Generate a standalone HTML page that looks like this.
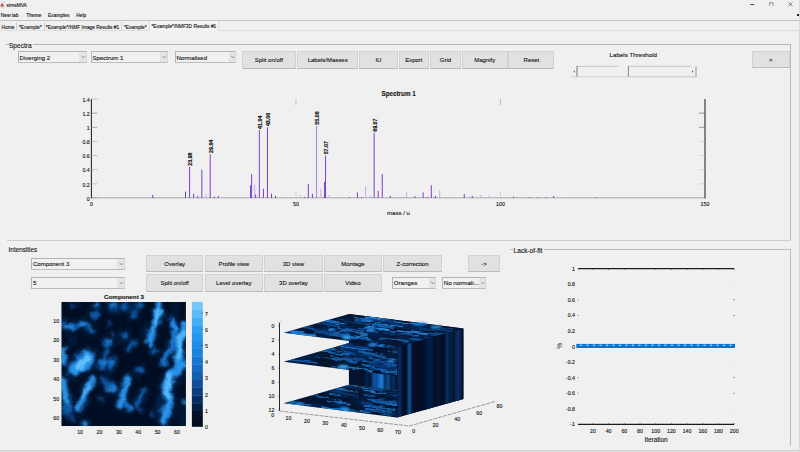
<!DOCTYPE html>
<html><head><meta charset="utf-8"><title>simsMVA</title>
<style>
html,body{margin:0;padding:0;}
body{width:800px;height:452px;overflow:hidden;background:#f0f0f0;position:relative;font-family:"Liberation Sans",sans-serif;color:#222;}
.t{position:absolute;white-space:nowrap;line-height:1;font-size:5.6px;color:#2a2a2a;}
.btn{position:absolute;background:#e1e1e1;border:1px solid #d2d2d2;border-bottom-color:#b9b9b9;box-sizing:border-box;text-align:center;font-size:6.0px;color:#333;white-space:nowrap;}
.btn span{position:absolute;left:0;right:0;top:50%;transform:translateY(-50%);line-height:1;}
.dd{position:absolute;background:#f1f1f1;border:1px solid #b4b4b4;border-right-color:#d6d6d6;border-bottom-color:#bcbcbc;box-sizing:border-box;}
.dd i{position:absolute;right:0;top:0;bottom:0;width:6.6px;background:#e4e4e4;}
.ln{position:absolute;background:#b8b8b8;}
svg{position:absolute;left:0;top:0;overflow:visible;}
svg text{font-family:"Liberation Sans",sans-serif;}
</style></head><body>

<svg width="800" height="452" viewBox="0 0 800 452">
<rect x="-0.5" y="1.6" width="5" height="6" fill="#f6f6f6" stroke="#cfcfcf" stroke-width="0.5"/>
<path d="M0.3 5.8 L2.4 2.6 L3.4 4.8 L4.3 7.0 L2.6 6.2 L1.4 7.0 Z" fill="#d8572a"/>
<path d="M0.2 5.8 L1.5 4.3 L2.3 2.9 L2.0 5.6 Z" fill="#4a78b8"/>
<path d="M750.2 4.6h4" stroke="#222" stroke-width="0.8" fill="none"/>
<path d="M769.6 5.8v-3.1h3.4v3.1" stroke="#555" stroke-width="0.6" fill="none"/>
<path d="M788.5 2.4l4 3.8M792.5 2.4l-4 3.8" stroke="#333" stroke-width="0.6" fill="none"/>
<rect x="797" y="14" width="2" height="2" fill="#222"/>
</svg>
<div class="ln" style="left:0.00px;top:20.00px;width:800.00px;height:1.00px;background:#c2c2c2"></div>
<div class="ln" style="left:0.00px;top:30.00px;width:800.00px;height:0.80px;background:#dddddd"></div>
<div style="position:absolute;left:16px;top:21.5px;width:0.8px;height:8.5px;background:#d4d4d4"></div>
<div style="position:absolute;left:43.5px;top:21.5px;width:0.8px;height:8.5px;background:#d4d4d4"></div>
<div style="position:absolute;left:121px;top:21.5px;width:0.8px;height:8.5px;background:#d4d4d4"></div>
<div style="position:absolute;left:148.5px;top:21.5px;width:0.8px;height:8.5px;background:#d4d4d4"></div>
<div style="position:absolute;left:148.5px;top:21px;width:70.69999999999999px;height:10px;background:#f4f4f4;border-right:1px solid #dcdcdc;border-left:1px solid #dcdcdc;box-sizing:border-box"></div>
<div class="ln" style="left:6.00px;top:44.20px;width:2.50px;height:0.90px;background:#b4b4b4"></div>
<div class="ln" style="left:32.50px;top:44.20px;width:758.50px;height:0.90px;background:#b4b4b4"></div>
<div class="ln" style="left:790.00px;top:44.20px;width:0.90px;height:196.40px;background:#b9b9b9"></div>
<div class="ln" style="left:7.00px;top:239.90px;width:784.00px;height:0.90px;background:#cfcfcf"></div>
<div class="dd" style="left:17.60px;top:50.90px;width:69.10px;height:12.00px"><i></i></div>
<div class="dd" style="left:90.50px;top:50.90px;width:77.10px;height:12.00px"><i></i></div>
<div class="dd" style="left:174.50px;top:50.90px;width:61.70px;height:12.00px"><i></i></div>
<div class="btn" style="left:242.00px;top:51.30px;width:53.80px;height:17.30px"></div>
<div class="btn" style="left:297.00px;top:51.30px;width:61.30px;height:17.30px"></div>
<div class="btn" style="left:359.30px;top:51.30px;width:38.30px;height:17.30px"></div>
<div class="btn" style="left:398.60px;top:51.30px;width:30.40px;height:17.30px"></div>
<div class="btn" style="left:430.20px;top:51.30px;width:30.60px;height:17.30px"></div>
<div class="btn" style="left:462.00px;top:51.30px;width:45.50px;height:17.30px"></div>
<div class="btn" style="left:508.40px;top:51.30px;width:46.10px;height:17.30px"></div>
<div class="btn" style="left:752.00px;top:51.30px;width:37.60px;height:17.00px"></div>
<svg width="800" height="452" viewBox="0 0 800 452">
<rect x="571" y="66" width="125.5" height="11" fill="#f0f0f0"/>
<path d="M577 66.4H619" stroke="#bdbdbd" stroke-width="0.8" fill="none"/>
<path d="M577 66v11" stroke="#6a6a6a" stroke-width="0.9" fill="none"/>
<path d="M571 76.8H628" stroke="#cfcfcf" stroke-width="0.9" fill="none"/>
<path d="M628.4 66.4H691" stroke="#bdbdbd" stroke-width="0.8" fill="none"/>
<path d="M628.4 66v11" stroke="#7a7a7a" stroke-width="0.9" fill="none"/>
<path d="M628.4 76.8H696" stroke="#c4c4c4" stroke-width="0.9" fill="none"/>
<path d="M696 66.4v10.6" stroke="#8a8a8a" stroke-width="0.9" fill="none"/>
<path d="M574.8 70.3l-1.3 1.2 1.3 1.2z" fill="#555"/>
<path d="M692 70.3l1.3 1.2 -1.3 1.2z" fill="#444"/>
</svg>
<svg width="800" height="452" viewBox="0 0 800 452">
<path d="M91.4 197.8H705.0" stroke="#a9a9a9" stroke-width="1.0" fill="none"/>
<path d="M91.4 99.0V198.4" stroke="#222" stroke-width="1.05" fill="none"/>
<path d="M705.0 99.0V198.4" stroke="#222" stroke-width="1.05" fill="none"/>
<path d="M91.4 198.00h6" stroke="#a2a2a2" stroke-width="0.6" fill="none"/>
<path d="M91.4 183.86h6" stroke="#a2a2a2" stroke-width="0.6" fill="none"/>
<path d="M705.0 183.86h-6" stroke="#c8c8c8" stroke-width="0.6" fill="none"/>
<path d="M91.4 169.71h6" stroke="#a2a2a2" stroke-width="0.6" fill="none"/>
<path d="M705.0 169.71h-6" stroke="#c8c8c8" stroke-width="0.6" fill="none"/>
<path d="M91.4 155.57h6" stroke="#a2a2a2" stroke-width="0.6" fill="none"/>
<path d="M705.0 155.57h-6" stroke="#c8c8c8" stroke-width="0.6" fill="none"/>
<path d="M91.4 141.43h6" stroke="#a2a2a2" stroke-width="0.6" fill="none"/>
<path d="M705.0 141.43h-6" stroke="#c8c8c8" stroke-width="0.6" fill="none"/>
<path d="M91.4 127.29h6" stroke="#777" stroke-width="0.6" fill="none"/>
<path d="M705.0 127.29h-6" stroke="#555" stroke-width="0.6" fill="none"/>
<path d="M91.4 113.14h6" stroke="#777" stroke-width="0.6" fill="none"/>
<path d="M705.0 113.14h-6" stroke="#555" stroke-width="0.6" fill="none"/>
<path d="M91.4 99.00h6" stroke="#a2a2a2" stroke-width="0.6" fill="none"/>
<path d="M295.93 198.0v-6" stroke="#c0c0c0" stroke-width="0.7" fill="none"/>
<path d="M295.93 99.0v6" stroke="#aaaaaa" stroke-width="0.7" fill="none"/>
<path d="M500.47 198.0v-6" stroke="#c0c0c0" stroke-width="0.7" fill="none"/>
<path d="M500.47 99.0v6" stroke="#aaaaaa" stroke-width="0.7" fill="none"/>
<path d="M148.75 198.0V197.15" stroke="#c3a6e3" stroke-width="0.95" fill="none"/>
<path d="M152.76 198.0V194.82" stroke="#7836c6" stroke-width="0.95" fill="none"/>
<path d="M185.49 198.0V191.64" stroke="#3d4a7a" stroke-width="0.95" fill="none"/>
<path d="M189.58 198.0V166.89" stroke="#7836c6" stroke-width="0.95" fill="none"/>
<path d="M193.67 198.0V193.76" stroke="#7836c6" stroke-width="0.95" fill="none"/>
<path d="M197.76 198.0V195.88" stroke="#7836c6" stroke-width="0.95" fill="none"/>
<path d="M201.85 198.0V169.71" stroke="#7836c6" stroke-width="0.95" fill="none"/>
<path d="M206.02 198.0V193.76" stroke="#c3a6e3" stroke-width="0.95" fill="none"/>
<path d="M210.19 198.0V154.16" stroke="#7836c6" stroke-width="0.95" fill="none"/>
<path d="M214.32 198.0V196.59" stroke="#7836c6" stroke-width="0.95" fill="none"/>
<path d="M218.42 198.0V195.88" stroke="#7836c6" stroke-width="0.95" fill="none"/>
<path d="M250.53 198.0V185.27" stroke="#7836c6" stroke-width="0.95" fill="none"/>
<path d="M251.63 198.0V173.96" stroke="#7836c6" stroke-width="0.95" fill="none"/>
<path d="M254.70 198.0V184.56" stroke="#c3a6e3" stroke-width="0.95" fill="none"/>
<path d="M255.64 198.0V194.46" stroke="#7836c6" stroke-width="0.95" fill="none"/>
<path d="M259.36 198.0V130.11" stroke="#7836c6" stroke-width="0.95" fill="none"/>
<path d="M263.41 198.0V188.81" stroke="#7836c6" stroke-width="0.95" fill="none"/>
<path d="M267.46 198.0V127.29" stroke="#7836c6" stroke-width="0.95" fill="none"/>
<path d="M271.47 198.0V193.76" stroke="#7836c6" stroke-width="0.95" fill="none"/>
<path d="M275.56 198.0V195.88" stroke="#7836c6" stroke-width="0.95" fill="none"/>
<path d="M300.23 198.0V195.17" stroke="#c3a6e3" stroke-width="0.95" fill="none"/>
<path d="M304.32 198.0V196.94" stroke="#7836c6" stroke-width="0.95" fill="none"/>
<path d="M308.33 198.0V183.86" stroke="#7836c6" stroke-width="0.95" fill="none"/>
<path d="M312.42 198.0V193.76" stroke="#7836c6" stroke-width="0.95" fill="none"/>
<path d="M316.59 198.0V125.87" stroke="#a77ddb" stroke-width="0.95" fill="none"/>
<path d="M320.89 198.0V188.81" stroke="#c3a6e3" stroke-width="0.95" fill="none"/>
<path d="M324.45 198.0V181.74" stroke="#7836c6" stroke-width="0.95" fill="none"/>
<path d="M325.55 198.0V155.57" stroke="#7836c6" stroke-width="0.95" fill="none"/>
<path d="M329.07 198.0V195.17" stroke="#c3a6e3" stroke-width="0.95" fill="none"/>
<path d="M349.32 198.0V197.15" stroke="#7836c6" stroke-width="0.95" fill="none"/>
<path d="M357.42 198.0V192.34" stroke="#7836c6" stroke-width="0.95" fill="none"/>
<path d="M361.51 198.0V196.94" stroke="#7836c6" stroke-width="0.95" fill="none"/>
<path d="M365.60 198.0V186.69" stroke="#c3a6e3" stroke-width="0.95" fill="none"/>
<path d="M369.97 198.0V195.17" stroke="#c3a6e3" stroke-width="0.95" fill="none"/>
<path d="M374.15 198.0V132.94" stroke="#7836c6" stroke-width="0.95" fill="none"/>
<path d="M378.16 198.0V190.93" stroke="#7836c6" stroke-width="0.95" fill="none"/>
<path d="M382.25 198.0V173.96" stroke="#7836c6" stroke-width="0.95" fill="none"/>
<path d="M386.34 198.0V197.15" stroke="#c3a6e3" stroke-width="0.95" fill="none"/>
<path d="M390.31 198.0V195.88" stroke="#7836c6" stroke-width="0.95" fill="none"/>
<path d="M394.40 198.0V197.15" stroke="#c3a6e3" stroke-width="0.95" fill="none"/>
<path d="M406.59 198.0V192.34" stroke="#c3a6e3" stroke-width="0.95" fill="none"/>
<path d="M410.88 198.0V197.15" stroke="#c3a6e3" stroke-width="0.95" fill="none"/>
<path d="M414.85 198.0V196.02" stroke="#7836c6" stroke-width="0.95" fill="none"/>
<path d="M423.15 198.0V192.34" stroke="#7836c6" stroke-width="0.95" fill="none"/>
<path d="M427.24 198.0V196.94" stroke="#7836c6" stroke-width="0.95" fill="none"/>
<path d="M431.33 198.0V185.27" stroke="#7836c6" stroke-width="0.95" fill="none"/>
<path d="M435.43 198.0V195.88" stroke="#7836c6" stroke-width="0.95" fill="none"/>
<path d="M439.72 198.0V190.22" stroke="#c3a6e3" stroke-width="0.95" fill="none"/>
<path d="M464.26 198.0V194.11" stroke="#7836c6" stroke-width="0.95" fill="none"/>
<path d="M472.24 198.0V195.88" stroke="#7836c6" stroke-width="0.95" fill="none"/>
<path d="M480.83 198.0V195.17" stroke="#c3a6e3" stroke-width="0.95" fill="none"/>
<path d="M484.51 198.0V197.15" stroke="#c3a6e3" stroke-width="0.95" fill="none"/>
<path d="M489.01 198.0V196.02" stroke="#c3a6e3" stroke-width="0.95" fill="none"/>
<path d="M496.79 198.0V197.15" stroke="#c3a6e3" stroke-width="0.95" fill="none"/>
<path d="M513.56 198.0V196.59" stroke="#7836c6" stroke-width="0.95" fill="none"/>
<path d="M521.33 198.0V197.01" stroke="#c3a6e3" stroke-width="0.95" fill="none"/>
<path d="M529.71 198.0V197.01" stroke="#7836c6" stroke-width="0.95" fill="none"/>
<path d="M537.69 198.0V197.15" stroke="#7836c6" stroke-width="0.95" fill="none"/>
<path d="M545.87 198.0V197.01" stroke="#7836c6" stroke-width="0.95" fill="none"/>
<path d="M553.65 198.0V196.02" stroke="#7836c6" stroke-width="0.95" fill="none"/>
<path d="M562.64 198.0V197.15" stroke="#c3a6e3" stroke-width="0.95" fill="none"/>
<path d="M595.78 198.0V197.15" stroke="#7836c6" stroke-width="0.95" fill="none"/>
<text transform="translate(192.38 165.69) rotate(-90)" font-size="5.3" font-weight="bold" fill="#0a0a0a" stroke="#0a0a0a" stroke-width="0.15">23.98</text>
<text transform="translate(213.04 152.96) rotate(-90)" font-size="5.3" font-weight="bold" fill="#0a0a0a" stroke="#0a0a0a" stroke-width="0.15">29.04</text>
<text transform="translate(262.13 128.91) rotate(-90)" font-size="5.3" font-weight="bold" fill="#0a0a0a" stroke="#0a0a0a" stroke-width="0.15">41.04</text>
<text transform="translate(270.31 126.09) rotate(-90)" font-size="5.3" font-weight="bold" fill="#0a0a0a" stroke="#0a0a0a" stroke-width="0.15">43.06</text>
<text transform="translate(319.40 124.67) rotate(-90)" font-size="5.3" font-weight="bold" fill="#0a0a0a" stroke="#0a0a0a" stroke-width="0.15">55.06</text>
<text transform="translate(328.40 154.37) rotate(-90)" font-size="5.3" font-weight="bold" fill="#0a0a0a" stroke="#0a0a0a" stroke-width="0.15">57.07</text>
<text transform="translate(376.87 131.74) rotate(-90)" font-size="5.3" font-weight="bold" fill="#0a0a0a" stroke="#0a0a0a" stroke-width="0.15">69.07</text>
</svg>
<div class="dd" style="left:31.00px;top:257.90px;width:94.00px;height:12.00px"><i></i></div>
<div class="dd" style="left:31.00px;top:276.90px;width:94.00px;height:12.00px"><i></i></div>
<div class="btn" style="left:145.80px;top:255.25px;width:57.70px;height:17.05px"></div>
<div class="btn" style="left:204.90px;top:255.25px;width:57.70px;height:17.05px"></div>
<div class="btn" style="left:264.20px;top:255.25px;width:58.40px;height:17.05px"></div>
<div class="btn" style="left:324.20px;top:255.25px;width:57.40px;height:17.05px"></div>
<div class="btn" style="left:383.30px;top:255.25px;width:58.40px;height:17.05px"></div>
<div class="btn" style="left:145.80px;top:274.30px;width:57.70px;height:17.50px"></div>
<div class="btn" style="left:204.90px;top:274.30px;width:57.70px;height:17.50px"></div>
<div class="btn" style="left:264.20px;top:274.30px;width:58.40px;height:17.50px"></div>
<div class="btn" style="left:324.20px;top:274.30px;width:57.40px;height:17.50px"></div>
<div class="btn" style="left:467.70px;top:255.25px;width:32.70px;height:17.05px"></div>
<div class="dd" style="left:391.70px;top:276.90px;width:44.60px;height:12.00px"><i></i></div>
<div class="dd" style="left:441.70px;top:276.90px;width:44.50px;height:12.00px"><i></i></div>
<svg width="800" height="452" viewBox="0 0 800 452">
<defs><filter id="b1" filterUnits="userSpaceOnUse" x="51.7" y="292.0" width="144.0" height="144.0"><feGaussianBlur stdDeviation="1.5"/></filter>
<filter id="b2" filterUnits="userSpaceOnUse" x="51.7" y="292.0" width="144.0" height="144.0"><feGaussianBlur stdDeviation="1.0"/></filter>
<filter id="b0" filterUnits="userSpaceOnUse" x="51.7" y="292.0" width="144.0" height="144.0"><feGaussianBlur stdDeviation="2.4"/></filter>
<clipPath id="cimg"><rect x="61.7" y="302.0" width="124.0" height="124.0"/></clipPath></defs>
<rect x="61.7" y="302.0" width="124.0" height="124.0" fill="#020e23"/>
<filter id="wob" filterUnits="userSpaceOnUse" x="51.7" y="292.0" width="144.0" height="144.0"><feTurbulence type="fractalNoise" baseFrequency="0.11" numOctaves="2" seed="7" result="n"/><feDisplacementMap in="SourceGraphic" in2="n" scale="7" xChannelSelector="R" yChannelSelector="G"/></filter>
<g clip-path="url(#cimg)"><g filter="url(#wob)">
<rect x="51.7" y="292.0" width="144.0" height="144.0" fill="#020e23"/>
<g filter="url(#b0)"><path d="M138.9 394.0L138.7 403.6" stroke="#06234e" stroke-width="5.2" stroke-linecap="round" stroke-linejoin="round" fill="none" opacity="0.7"/><path d="M176.1 305.6L173.9 315.2" stroke="#06234e" stroke-width="4.9" stroke-linecap="round" stroke-linejoin="round" fill="none" opacity="0.7"/><path d="M173.4 316.0L171.2 320.8" stroke="#06234e" stroke-width="4.6" stroke-linecap="round" stroke-linejoin="round" fill="none" opacity="0.7"/><path d="M132.9 303.6L129.2 308.6" stroke="#06234e" stroke-width="5.7" stroke-linecap="round" stroke-linejoin="round" fill="none" opacity="0.7"/><path d="M156.6 321.8L156.4 325.8" stroke="#06234e" stroke-width="4.9" stroke-linecap="round" stroke-linejoin="round" fill="none" opacity="0.7"/><path d="M77.4 302.2L77.6 306.7" stroke="#06234e" stroke-width="3.6" stroke-linecap="round" stroke-linejoin="round" fill="none" opacity="0.7"/><path d="M183.5 410.2L180.3 419.9" stroke="#06234e" stroke-width="4.6" stroke-linecap="round" stroke-linejoin="round" fill="none" opacity="0.7"/><path d="M145.8 327.4L146.4 335.2" stroke="#06234e" stroke-width="5.9" stroke-linecap="round" stroke-linejoin="round" fill="none" opacity="0.7"/><path d="M172.5 339.0L169.7 343.2" stroke="#06234e" stroke-width="3.4" stroke-linecap="round" stroke-linejoin="round" fill="none" opacity="0.7"/><path d="M69.8 339.4L68.4 342.4" stroke="#06234e" stroke-width="5.0" stroke-linecap="round" stroke-linejoin="round" fill="none" opacity="0.7"/><path d="M103.6 340.4L103.5 346.8" stroke="#06234e" stroke-width="3.9" stroke-linecap="round" stroke-linejoin="round" fill="none" opacity="0.7"/><path d="M121.4 389.4L116.7 399.2" stroke="#06234e" stroke-width="3.1" stroke-linecap="round" stroke-linejoin="round" fill="none" opacity="0.7"/><path d="M154.7 406.8L149.8 415.3" stroke="#06234e" stroke-width="4.1" stroke-linecap="round" stroke-linejoin="round" fill="none" opacity="0.7"/><path d="M133.4 303.1L128.7 307.4" stroke="#06234e" stroke-width="5.9" stroke-linecap="round" stroke-linejoin="round" fill="none" opacity="0.7"/><path d="M86.1 395.7L86.6 405.3" stroke="#06234e" stroke-width="4.0" stroke-linecap="round" stroke-linejoin="round" fill="none" opacity="0.7"/><path d="M105.7 367.1L105.3 370.8" stroke="#06234e" stroke-width="5.2" stroke-linecap="round" stroke-linejoin="round" fill="none" opacity="0.7"/><path d="M160.6 408.6L155.8 418.2" stroke="#06234e" stroke-width="3.3" stroke-linecap="round" stroke-linejoin="round" fill="none" opacity="0.7"/><path d="M104.0 377.7L104.5 383.1" stroke="#06234e" stroke-width="5.8" stroke-linecap="round" stroke-linejoin="round" fill="none" opacity="0.7"/><path d="M129.3 340.7L126.2 345.0" stroke="#06234e" stroke-width="3.2" stroke-linecap="round" stroke-linejoin="round" fill="none" opacity="0.7"/><path d="M80.2 387.5L81.1 391.6" stroke="#06234e" stroke-width="3.1" stroke-linecap="round" stroke-linejoin="round" fill="none" opacity="0.7"/><path d="M184.1 368.2L181.5 372.8" stroke="#06234e" stroke-width="4.8" stroke-linecap="round" stroke-linejoin="round" fill="none" opacity="0.7"/><path d="M164.2 358.5L161.7 361.9" stroke="#06234e" stroke-width="5.7" stroke-linecap="round" stroke-linejoin="round" fill="none" opacity="0.7"/><path d="M65.8 363.2L65.8 367.1" stroke="#06234e" stroke-width="5.2" stroke-linecap="round" stroke-linejoin="round" fill="none" opacity="0.7"/><path d="M179.5 380.2L179.2 383.9" stroke="#06234e" stroke-width="4.3" stroke-linecap="round" stroke-linejoin="round" fill="none" opacity="0.7"/><path d="M80.2 406.7L77.0 412.9" stroke="#06234e" stroke-width="6.0" stroke-linecap="round" stroke-linejoin="round" fill="none" opacity="0.7"/><path d="M167.4 423.0L165.1 429.4" stroke="#06234e" stroke-width="5.2" stroke-linecap="round" stroke-linejoin="round" fill="none" opacity="0.7"/><path d="M121.1 338.1L118.5 342.1" stroke="#06234e" stroke-width="4.1" stroke-linecap="round" stroke-linejoin="round" fill="none" opacity="0.7"/><path d="M184.3 421.0L183.0 427.5" stroke="#06234e" stroke-width="4.0" stroke-linecap="round" stroke-linejoin="round" fill="none" opacity="0.7"/><path d="M72.8 335.8L72.4 344.8" stroke="#06234e" stroke-width="4.1" stroke-linecap="round" stroke-linejoin="round" fill="none" opacity="0.7"/><path d="M159.2 398.1L158.3 405.7" stroke="#06234e" stroke-width="5.3" stroke-linecap="round" stroke-linejoin="round" fill="none" opacity="0.7"/><circle cx="113.2" cy="305.8" r="7.2" fill="#093a78" opacity="0.6"/><circle cx="96.7" cy="305.0" r="4.5" fill="#093a78" opacity="0.6"/><circle cx="94.5" cy="315.1" r="5.1" fill="#093a78" opacity="0.6"/><path d="M64.3 327.3L72.9 326.6L81.6 323.0L87.3 326.6L93.1 330.9" stroke="#093a78" stroke-width="7.2" stroke-linecap="round" stroke-linejoin="round" fill="none" opacity="0.6"/><circle cx="62.9" cy="323.0" r="4.5" fill="#093a78" opacity="0.6"/><circle cx="108.2" cy="342.4" r="5.1" fill="#093a78" opacity="0.6"/><path d="M62.9 351.0L63.2 362.0" stroke="#0c4890" stroke-width="8.0" stroke-linecap="round" stroke-linejoin="round" fill="none" opacity="0.6"/><path d="M87.2 357.0L81.7 362.5L74.7 369.5" stroke="#0c4890" stroke-width="17.6" stroke-linecap="round" stroke-linejoin="round" fill="none" opacity="0.6"/><circle cx="87.7" cy="364.0" r="7.2" fill="#0c4890" opacity="0.6"/><circle cx="77.7" cy="360.0" r="5.6" fill="#093a78" opacity="0.6"/><circle cx="103.1" cy="361.8" r="5.1" fill="#0c4890" opacity="0.6"/><circle cx="111.7" cy="362.0" r="5.4" fill="#093a78" opacity="0.6"/><path d="M107.5 349.5L103.7 360.0" stroke="#093a78" stroke-width="4.6" stroke-linecap="round" stroke-linejoin="round" fill="none" opacity="0.6"/><circle cx="124.0" cy="334.5" r="4.8" fill="#093a78" opacity="0.6"/><path d="M158.7 304.0L157.9 317.3L152.9 328.8L150.0 342.0" stroke="#0c4890" stroke-width="9.6" stroke-linecap="round" stroke-linejoin="round" fill="none" opacity="0.6"/><path d="M173.0 321.0L174.5 330.2L171.6 347.5L165.1 357.5L163.7 363.3" stroke="#093a78" stroke-width="6.7" stroke-linecap="round" stroke-linejoin="round" fill="none" opacity="0.6"/><path d="M185.7 326.0L180.2 337.4L178.8 348.9L179.5 363.3" stroke="#0c4890" stroke-width="11.2" stroke-linecap="round" stroke-linejoin="round" fill="none" opacity="0.6"/><circle cx="139.3" cy="305.0" r="4.8" fill="#093a78" opacity="0.6"/><circle cx="124.2" cy="307.2" r="4.8" fill="#093a78" opacity="0.6"/><circle cx="134.2" cy="314.4" r="5.8" fill="#093a78" opacity="0.6"/><circle cx="125.6" cy="335.2" r="4.8" fill="#093a78" opacity="0.6"/><path d="M134.9 343.1L129.2 349.6" stroke="#093a78" stroke-width="5.5" stroke-linecap="round" stroke-linejoin="round" fill="none" opacity="0.6"/><circle cx="154.4" cy="351.0" r="4.5" fill="#093a78" opacity="0.6"/><path d="M62.7 379.0L65.0 394.6L68.6 406.0" stroke="#0c4890" stroke-width="8.8" stroke-linecap="round" stroke-linejoin="round" fill="none" opacity="0.6"/><path d="M92.4 378.8L87.3 390.3L81.6 400.4L78.7 407.6" stroke="#0c4890" stroke-width="8.0" stroke-linecap="round" stroke-linejoin="round" fill="none" opacity="0.6"/><circle cx="111.7" cy="388.2" r="6.7" fill="#0c4890" opacity="0.6"/><path d="M103.1 378.8L111.7 388.2" stroke="#093a78" stroke-width="5.2" stroke-linecap="round" stroke-linejoin="round" fill="none" opacity="0.6"/><path d="M128.5 377.4L124.7 389.0L120.4 406.0" stroke="#0c4890" stroke-width="8.0" stroke-linecap="round" stroke-linejoin="round" fill="none" opacity="0.6"/><circle cx="110.3" cy="367.3" r="4.8" fill="#093a78" opacity="0.6"/><circle cx="101.7" cy="365.0" r="4.8" fill="#093a78" opacity="0.6"/><circle cx="84.4" cy="424.0" r="4.2" fill="#0c4890" opacity="0.6"/><circle cx="66.7" cy="410.0" r="7.2" fill="#093a78" opacity="0.6"/><path d="M182.4 365.9L172.3 373.0L165.9 386.0L169.5 400.4L166.6 410.5L163.7 420.5" stroke="#0c4890" stroke-width="12.0" stroke-linecap="round" stroke-linejoin="round" fill="none" opacity="0.6"/><circle cx="140.0" cy="370.2" r="5.1" fill="#093a78" opacity="0.6"/><path d="M143.6 390.3L137.1 406.1" stroke="#093a78" stroke-width="6.1" stroke-linecap="round" stroke-linejoin="round" fill="none" opacity="0.6"/><path d="M126.3 402.5L129.9 409.0" stroke="#093a78" stroke-width="6.1" stroke-linecap="round" stroke-linejoin="round" fill="none" opacity="0.6"/><circle cx="185.3" cy="401.8" r="4.2" fill="#0c4890" opacity="0.6"/></g>
<g filter="url(#b1)"><circle cx="113.2" cy="305.8" r="3" fill="#62c0fb" opacity="1.0"/><circle cx="113.2" cy="305.8" r="4.95" fill="#105aa8" opacity="0.8"/><circle cx="96.7" cy="305.0" r="3.08" fill="#1874cc" opacity="1.0"/><circle cx="72.2" cy="305.8" r="3.2" fill="#09346e" opacity="1.0"/><circle cx="94.5" cy="315.1" r="3.5200000000000005" fill="#105aa8" opacity="1.0"/><path d="M64.3 327.3L72.9 326.6L81.6 323.0L87.3 326.6L93.1 330.9" stroke="#105aa8" stroke-width="5.5" stroke-linecap="round" stroke-linejoin="round" fill="none" opacity="1.0"/><circle cx="62.9" cy="323.0" r="3.08" fill="#105aa8" opacity="1.0"/><circle cx="108.2" cy="342.4" r="3.5200000000000005" fill="#1874cc" opacity="1.0"/><circle cx="109.7" cy="323.7" r="3" fill="#09346e" opacity="1.0"/><circle cx="113.2" cy="334.5" r="3" fill="#09346e" opacity="1.0"/><path d="M62.9 351.0L63.2 362.0" stroke="#2794ec" stroke-width="5.5" stroke-linecap="round" stroke-linejoin="round" fill="none" opacity="1.0"/><path d="M87.2 357.0L81.7 362.5L74.7 369.5" stroke="#2794ec" stroke-width="12.1" stroke-linecap="round" stroke-linejoin="round" fill="none" opacity="1.0"/><circle cx="87.7" cy="364.0" r="4.95" fill="#2794ec" opacity="1.0"/><circle cx="77.7" cy="360.0" r="3.8500000000000005" fill="#1874cc" opacity="1.0"/><circle cx="103.1" cy="361.8" r="3.5200000000000005" fill="#2794ec" opacity="1.0"/><circle cx="111.7" cy="362.0" r="3.74" fill="#1874cc" opacity="1.0"/><path d="M107.5 349.5L103.7 360.0" stroke="#105aa8" stroke-width="3.5" stroke-linecap="round" stroke-linejoin="round" fill="none" opacity="1.0"/><circle cx="124.0" cy="334.5" r="3.3000000000000003" fill="#105aa8" opacity="1.0"/><path d="M158.7 304.0L157.9 317.3L152.9 328.8L150.0 342.0" stroke="#2794ec" stroke-width="6.6" stroke-linecap="round" stroke-linejoin="round" fill="none" opacity="1.0"/><path d="M173.0 321.0L174.5 330.2L171.6 347.5L165.1 357.5L163.7 363.3" stroke="#1874cc" stroke-width="5.1" stroke-linecap="round" stroke-linejoin="round" fill="none" opacity="1.0"/><path d="M185.7 326.0L180.2 337.4L178.8 348.9L179.5 363.3" stroke="#2794ec" stroke-width="7.7" stroke-linecap="round" stroke-linejoin="round" fill="none" opacity="1.0"/><circle cx="139.3" cy="305.0" r="3.3000000000000003" fill="#105aa8" opacity="1.0"/><circle cx="124.2" cy="307.2" r="3.3000000000000003" fill="#105aa8" opacity="1.0"/><circle cx="134.2" cy="314.4" r="3.9600000000000004" fill="#105aa8" opacity="0.8"/><circle cx="125.6" cy="335.2" r="3.3000000000000003" fill="#105aa8" opacity="1.0"/><path d="M134.9 343.1L129.2 349.6" stroke="#105aa8" stroke-width="4.2" stroke-linecap="round" stroke-linejoin="round" fill="none" opacity="1.0"/><circle cx="154.4" cy="351.0" r="3.08" fill="#105aa8" opacity="1.0"/><circle cx="169.5" cy="317.3" r="3" fill="#09346e" opacity="1.0"/><path d="M62.7 379.0L65.0 394.6L68.6 406.0" stroke="#2794ec" stroke-width="6.1" stroke-linecap="round" stroke-linejoin="round" fill="none" opacity="1.0"/><path d="M92.4 378.8L87.3 390.3L81.6 400.4L78.7 407.6" stroke="#2794ec" stroke-width="5.5" stroke-linecap="round" stroke-linejoin="round" fill="none" opacity="1.0"/><circle cx="111.7" cy="388.2" r="4.620000000000001" fill="#2794ec" opacity="1.0"/><path d="M103.1 378.8L111.7 388.2" stroke="#105aa8" stroke-width="4.0" stroke-linecap="round" stroke-linejoin="round" fill="none" opacity="1.0"/><path d="M128.5 377.4L124.7 389.0L120.4 406.0" stroke="#2794ec" stroke-width="5.5" stroke-linecap="round" stroke-linejoin="round" fill="none" opacity="1.0"/><circle cx="110.3" cy="367.3" r="3.3000000000000003" fill="#105aa8" opacity="1.0"/><circle cx="101.7" cy="365.0" r="3.3000000000000003" fill="#1874cc" opacity="1.0"/><circle cx="84.4" cy="424.0" r="2.8600000000000003" fill="#2794ec" opacity="1.0"/><circle cx="66.7" cy="410.0" r="4.95" fill="#105aa8" opacity="1.0"/><circle cx="101.7" cy="399.0" r="3" fill="#09346e" opacity="1.0"/><circle cx="71.7" cy="418.0" r="4" fill="#09346e" opacity="1.0"/><path d="M182.4 365.9L172.3 373.0L165.9 386.0L169.5 400.4L166.6 410.5L163.7 420.5" stroke="#2794ec" stroke-width="8.2" stroke-linecap="round" stroke-linejoin="round" fill="none" opacity="1.0"/><circle cx="140.0" cy="370.2" r="3.5200000000000005" fill="#105aa8" opacity="1.0"/><path d="M143.6 390.3L137.1 406.1" stroke="#105aa8" stroke-width="4.6" stroke-linecap="round" stroke-linejoin="round" fill="none" opacity="1.0"/><path d="M126.3 402.5L129.9 409.0" stroke="#1874cc" stroke-width="4.6" stroke-linecap="round" stroke-linejoin="round" fill="none" opacity="1.0"/><circle cx="185.3" cy="401.8" r="2.8600000000000003" fill="#2794ec" opacity="1.0"/><circle cx="140.7" cy="410.0" r="3" fill="#09346e" opacity="1.0"/><circle cx="151.7" cy="414.0" r="3" fill="#09346e" opacity="1.0"/></g>
<g filter="url(#b2)"><path d="M66.2 327.3L72.7 326.8" stroke="#2794ec" stroke-width="3.0" stroke-linecap="round" stroke-linejoin="round" fill="none" opacity="0.9"/><circle cx="81.6" cy="323.0" r="2.2" fill="#2794ec" opacity="0.9"/><path d="M86.2 358.0L78.7 365.5" stroke="#62c0fb" stroke-width="6.5" stroke-linecap="round" stroke-linejoin="round" fill="none" opacity="1"/><path d="M158.3 311.0L156.2 323.0" stroke="#62c0fb" stroke-width="3.0" stroke-linecap="round" stroke-linejoin="round" fill="none" opacity="0.9"/><path d="M173.2 322.5L174.3 331.0" stroke="#2794ec" stroke-width="3.0" stroke-linecap="round" stroke-linejoin="round" fill="none" opacity="0.9"/><path d="M182.7 332.0L179.7 342.0L179.0 357.0" stroke="#62c0fb" stroke-width="3.4" stroke-linecap="round" stroke-linejoin="round" fill="none" opacity="0.9"/><path d="M89.7 384.0L83.7 396.0" stroke="#62c0fb" stroke-width="2.5" stroke-linecap="round" stroke-linejoin="round" fill="none" opacity="0.7"/><path d="M170.7 375.0L166.2 387.0L167.7 396.0" stroke="#62c0fb" stroke-width="4.0" stroke-linecap="round" stroke-linejoin="round" fill="none" opacity="0.9"/></g>
</g></g>
<rect x="191.9" y="418.71" width="10.90" height="8.09" fill="rgb(2, 12, 29)"/>
<rect x="191.9" y="410.93" width="10.90" height="8.09" fill="rgb(3, 18, 41)"/>
<rect x="191.9" y="403.14" width="10.90" height="8.09" fill="rgb(5, 29, 62)"/>
<rect x="191.9" y="395.35" width="10.90" height="8.09" fill="rgb(8, 46, 97)"/>
<rect x="191.9" y="387.56" width="10.90" height="8.09" fill="rgb(11, 63, 128)"/>
<rect x="191.9" y="379.77" width="10.90" height="8.09" fill="rgb(15, 79, 153)"/>
<rect x="191.9" y="371.99" width="10.90" height="8.09" fill="rgb(18, 95, 176)"/>
<rect x="191.9" y="364.20" width="10.90" height="8.09" fill="rgb(21, 107, 193)"/>
<rect x="191.9" y="356.41" width="10.90" height="8.09" fill="rgb(24, 119, 209)"/>
<rect x="191.9" y="348.62" width="10.90" height="8.09" fill="rgb(27, 130, 219)"/>
<rect x="191.9" y="340.84" width="10.90" height="8.09" fill="rgb(30, 140, 228)"/>
<rect x="191.9" y="333.05" width="10.90" height="8.09" fill="rgb(38, 150, 235)"/>
<rect x="191.9" y="325.26" width="10.90" height="8.09" fill="rgb(46, 160, 242)"/>
<rect x="191.9" y="317.47" width="10.90" height="8.09" fill="rgb(68, 173, 244)"/>
<rect x="191.9" y="309.69" width="10.90" height="8.09" fill="rgb(90, 187, 247)"/>
<rect x="191.9" y="301.90" width="10.90" height="8.09" fill="rgb(116, 201, 250)"/>
<path d="M202.8 426.30h-1.6" stroke="#222" stroke-width="0.5"/>
<path d="M202.8 410.16h-1.6" stroke="#222" stroke-width="0.5"/>
<path d="M202.8 394.02h-1.6" stroke="#222" stroke-width="0.5"/>
<path d="M202.8 377.88h-1.6" stroke="#222" stroke-width="0.5"/>
<path d="M202.8 361.74h-1.6" stroke="#222" stroke-width="0.5"/>
<path d="M202.8 345.60h-1.6" stroke="#222" stroke-width="0.5"/>
<path d="M202.8 329.46h-1.6" stroke="#222" stroke-width="0.5"/>
<path d="M202.8 313.32h-1.6" stroke="#222" stroke-width="0.5"/>
</svg>
<svg width="800" height="452" viewBox="0 0 800 452">
<defs><filter id="b3" x="-10%" y="-10%" width="120%" height="120%"><feGaussianBlur stdDeviation="1.0"/></filter><filter id="b4" x="-10%" y="-10%" width="120%" height="120%"><feTurbulence type="fractalNoise" baseFrequency="0.06 0.2" numOctaves="2" seed="3" result="n"/><feDisplacementMap in="SourceGraphic" in2="n" scale="5" xChannelSelector="R" yChannelSelector="G" result="d"/><feGaussianBlur in="d" stdDeviation="0.7"/></filter><filter id="b5" x="-10%" y="-10%" width="120%" height="120%"><feGaussianBlur stdDeviation="2"/></filter>
<clipPath id="s0"><polygon points="283.8,332.7 348.9,314.1 463.4,328.5 397.0,347.0"/></clipPath>
<clipPath id="s1"><polygon points="283.8,361.7 348.9,343.1 463.4,357.5 397.0,376.0"/></clipPath>
<clipPath id="s2"><polygon points="283.8,403.3 348.9,384.7 463.4,399.1 397.0,417.6"/></clipPath>
<clipPath id="fr"><polygon points="397.0,347.0 463.4,328.5 463.4,399.1 397.0,417.6"/></clipPath>
<clipPath id="br"><polygon points="348.9,314.1 463.4,328.5 463.4,399.1 348.9,384.7"/></clipPath>
</defs>
<polygon points="348.9,314.1 463.4,328.5 463.4,399.1 348.9,384.7" fill="#04142e"/>
<g clip-path="url(#br)" filter="url(#b3)">
<rect x="372" y="310" width="7" height="100" fill="#0b4f9e"/>
<rect x="379" y="310" width="5" height="100" fill="#1a78d0"/>
<rect x="386" y="310" width="4" height="100" fill="#0c4c96"/>
<rect x="392" y="310" width="3" height="100" fill="#092f66"/>
<rect x="365" y="310" width="4" height="100" fill="#06234d"/>
</g>
<polygon points="283.8,403.3 348.9,384.7 463.4,399.1 397.0,417.6" fill="#04152f"/>
<g clip-path="url(#s2)"><g filter="url(#b5)">
<ellipse cx="364.3" cy="401.6" rx="13.4" ry="2.2" fill="#0a3674" opacity="0.38" transform="rotate(7 364.3 401.6)"/>
<ellipse cx="404.1" cy="396.6" rx="10.1" ry="2.4" fill="#0a3674" opacity="0.48" transform="rotate(7 404.1 396.6)"/>
<ellipse cx="339.9" cy="391.7" rx="6.7" ry="2.7" fill="#0a3674" opacity="0.44" transform="rotate(7 339.9 391.7)"/>
<ellipse cx="289.8" cy="403.6" rx="13.7" ry="2.5" fill="#0a3674" opacity="0.42" transform="rotate(7 289.8 403.6)"/>
<ellipse cx="366.0" cy="387.2" rx="10.2" ry="1.6" fill="#0a3674" opacity="0.27" transform="rotate(7 366.0 387.2)"/>
<ellipse cx="374.6" cy="388.7" rx="9.7" ry="2.2" fill="#0a3674" opacity="0.49" transform="rotate(7 374.6 388.7)"/>
<ellipse cx="366.7" cy="404.1" rx="10.0" ry="2.5" fill="#0a3674" opacity="0.36" transform="rotate(7 366.7 404.1)"/>
<ellipse cx="315.8" cy="407.3" rx="14.0" ry="2.8" fill="#0a3674" opacity="0.45" transform="rotate(7 315.8 407.3)"/>
<ellipse cx="370.0" cy="393.5" rx="8.3" ry="1.6" fill="#0a3674" opacity="0.47" transform="rotate(7 370.0 393.5)"/>
<ellipse cx="339.6" cy="406.2" rx="9.1" ry="2.9" fill="#0a3674" opacity="0.50" transform="rotate(7 339.6 406.2)"/>
<ellipse cx="335.3" cy="388.6" rx="13.3" ry="2.2" fill="#0a3674" opacity="0.54" transform="rotate(7 335.3 388.6)"/>
<ellipse cx="389.7" cy="391.8" rx="11.0" ry="2.7" fill="#0a3674" opacity="0.29" transform="rotate(7 389.7 391.8)"/>
<ellipse cx="337.2" cy="392.1" rx="13.7" ry="2.6" fill="#0a3674" opacity="0.24" transform="rotate(7 337.2 392.1)"/>
<ellipse cx="370.5" cy="390.1" rx="6.5" ry="2.7" fill="#0a3674" opacity="0.26" transform="rotate(7 370.5 390.1)"/>
<ellipse cx="383.8" cy="401.1" rx="7.5" ry="2.6" fill="#0a3674" opacity="0.25" transform="rotate(7 383.8 401.1)"/>
</g></g>
<g clip-path="url(#s2)"><g filter="url(#b4)">
<path d="M405.0 395.3L425.1 396.9" stroke="#0a3874" stroke-width="1.8" stroke-linecap="round" opacity="0.94"/>
<path d="M346.6 411.1L357.0 412.5" stroke="#1f86e0" stroke-width="1.7" stroke-linecap="round" opacity="0.79"/>
<path d="M288.4 403.9L303.5 405.2" stroke="#2f9ff2" stroke-width="1.5" stroke-linecap="round" opacity="0.87"/>
<path d="M380.8 391.0L395.8 392.3" stroke="#0a3874" stroke-width="1.2" stroke-linecap="round" opacity="0.78"/>
<path d="M310.2 394.7L340.2 400.2" stroke="#1f86e0" stroke-width="1.0" stroke-linecap="round" opacity="0.57"/>
<path d="M391.7 412.2L407.7 413.8" stroke="#0a3874" stroke-width="1.5" stroke-linecap="round" opacity="0.75"/>
<path d="M391.5 400.4L413.1 403.2" stroke="#1668c0" stroke-width="0.9" stroke-linecap="round" opacity="0.52"/>
<path d="M430.2 401.2L457.1 404.8" stroke="#2f9ff2" stroke-width="1.8" stroke-linecap="round" opacity="0.72"/>
<path d="M331.2 407.7L364.7 411.3" stroke="#1f86e0" stroke-width="1.4" stroke-linecap="round" opacity="0.88"/>
<path d="M385.0 396.0L417.0 401.5" stroke="#0a3874" stroke-width="0.9" stroke-linecap="round" opacity="0.69"/>
<path d="M366.0 388.4L382.8 389.9" stroke="#1f86e0" stroke-width="1.0" stroke-linecap="round" opacity="0.70"/>
<path d="M327.8 401.4L350.3 404.8" stroke="#1f86e0" stroke-width="1.8" stroke-linecap="round" opacity="0.71"/>
<path d="M364.1 394.9L374.9 396.4" stroke="#1668c0" stroke-width="1.6" stroke-linecap="round" opacity="0.64"/>
<path d="M446.9 398.3L470.0 402.7" stroke="#0d4a94" stroke-width="1.6" stroke-linecap="round" opacity="0.82"/>
<path d="M370.9 411.4L389.4 414.9" stroke="#1f86e0" stroke-width="1.8" stroke-linecap="round" opacity="0.69"/>
<path d="M371.3 410.7L395.1 413.6" stroke="#0a3874" stroke-width="0.8" stroke-linecap="round" opacity="0.53"/>
<path d="M343.7 386.8L359.8 389.5" stroke="#0a3874" stroke-width="1.2" stroke-linecap="round" opacity="0.83"/>
<path d="M371.7 399.1L401.8 403.4" stroke="#1668c0" stroke-width="1.4" stroke-linecap="round" opacity="0.64"/>
<path d="M341.0 384.1L374.0 388.7" stroke="#1668c0" stroke-width="1.5" stroke-linecap="round" opacity="0.91"/>
<path d="M368.8 387.4L386.1 389.8" stroke="#0a3874" stroke-width="1.6" stroke-linecap="round" opacity="0.65"/>
<path d="M415.1 406.1L430.9 408.6" stroke="#0a3874" stroke-width="1.0" stroke-linecap="round" opacity="0.69"/>
<path d="M366.1 411.7L397.2 415.0" stroke="#0a3874" stroke-width="1.8" stroke-linecap="round" opacity="0.59"/>
<path d="M325.7 390.6L357.2 395.8" stroke="#0d4a94" stroke-width="1.8" stroke-linecap="round" opacity="0.62"/>
<path d="M330.6 394.0L347.2 397.0" stroke="#0a3874" stroke-width="1.2" stroke-linecap="round" opacity="0.73"/>
<path d="M364.1 405.9L394.3 409.5" stroke="#1f86e0" stroke-width="1.7" stroke-linecap="round" opacity="0.63"/>
<path d="M365.9 405.1L382.7 407.0" stroke="#1668c0" stroke-width="1.7" stroke-linecap="round" opacity="0.51"/>
<path d="M329.6 394.5L340.1 395.7" stroke="#2f9ff2" stroke-width="1.0" stroke-linecap="round" opacity="0.52"/>
<path d="M379.3 399.6L404.4 404.5" stroke="#1668c0" stroke-width="1.6" stroke-linecap="round" opacity="0.59"/>
<path d="M386.5 394.1L396.8 395.6" stroke="#1f86e0" stroke-width="0.8" stroke-linecap="round" opacity="0.60"/>
<path d="M386.6 403.9L419.3 408.0" stroke="#1f86e0" stroke-width="1.7" stroke-linecap="round" opacity="0.91"/>
<path d="M284.5 401.5L311.8 405.1" stroke="#1f86e0" stroke-width="1.0" stroke-linecap="round" opacity="0.90"/>
<path d="M301.0 393.3L326.7 396.8" stroke="#1668c0" stroke-width="1.5" stroke-linecap="round" opacity="0.59"/>
<path d="M365.6 409.0L391.0 411.7" stroke="#1668c0" stroke-width="1.8" stroke-linecap="round" opacity="0.94"/>
<path d="M411.4 407.1L440.3 410.4" stroke="#1668c0" stroke-width="1.6" stroke-linecap="round" opacity="0.51"/>
<path d="M395.2 391.1L413.4 394.2" stroke="#0a3874" stroke-width="1.3" stroke-linecap="round" opacity="0.51"/>
<path d="M422.8 395.4L452.0 399.6" stroke="#1f86e0" stroke-width="1.6" stroke-linecap="round" opacity="0.91"/>
<path d="M321.9 407.0L353.5 413.1" stroke="#1f86e0" stroke-width="1.3" stroke-linecap="round" opacity="0.93"/>
<path d="M333.0 388.0L355.7 392.1" stroke="#2f9ff2" stroke-width="1.4" stroke-linecap="round" opacity="0.57"/>
<path d="M340.6 407.4L356.8 410.6" stroke="#0a3874" stroke-width="1.8" stroke-linecap="round" opacity="0.77"/>
<path d="M363.0 390.0L386.1 393.4" stroke="#2f9ff2" stroke-width="1.0" stroke-linecap="round" opacity="0.74"/>
<path d="M361.8 402.4L372.4 404.0" stroke="#0d4a94" stroke-width="1.2" stroke-linecap="round" opacity="0.86"/>
<path d="M368.1 399.4L394.7 404.5" stroke="#1668c0" stroke-width="1.3" stroke-linecap="round" opacity="0.91"/>
<path d="M406.3 403.0L422.2 404.5" stroke="#1f86e0" stroke-width="1.3" stroke-linecap="round" opacity="0.87"/>
<path d="M412.2 405.4L429.8 407.7" stroke="#0a3874" stroke-width="0.8" stroke-linecap="round" opacity="0.62"/>
<path d="M360.2 412.4L371.1 413.6" stroke="#1f86e0" stroke-width="1.6" stroke-linecap="round" opacity="0.64"/>
</g></g>
<polygon points="283.8,361.7 348.9,343.1 463.4,357.5 397.0,376.0" fill="#04152f"/>
<g clip-path="url(#s1)"><g filter="url(#b5)">
<ellipse cx="349.2" cy="359.7" rx="6.8" ry="2.6" fill="#0a3674" opacity="0.24" transform="rotate(7 349.2 359.7)"/>
<ellipse cx="391.0" cy="355.1" rx="7.6" ry="2.3" fill="#0a3674" opacity="0.35" transform="rotate(7 391.0 355.1)"/>
<ellipse cx="365.0" cy="356.2" rx="10.2" ry="1.7" fill="#0a3674" opacity="0.27" transform="rotate(7 365.0 356.2)"/>
<ellipse cx="379.6" cy="364.1" rx="10.2" ry="2.8" fill="#0a3674" opacity="0.41" transform="rotate(7 379.6 364.1)"/>
<ellipse cx="431.9" cy="359.8" rx="11.9" ry="2.7" fill="#0a3674" opacity="0.52" transform="rotate(7 431.9 359.8)"/>
<ellipse cx="364.6" cy="353.5" rx="13.4" ry="1.8" fill="#0a3674" opacity="0.55" transform="rotate(7 364.6 353.5)"/>
<ellipse cx="441.8" cy="358.4" rx="7.9" ry="2.6" fill="#0a3674" opacity="0.29" transform="rotate(7 441.8 358.4)"/>
<ellipse cx="305.8" cy="360.0" rx="9.4" ry="2.7" fill="#0a3674" opacity="0.24" transform="rotate(7 305.8 360.0)"/>
<ellipse cx="350.4" cy="361.6" rx="6.1" ry="1.8" fill="#0a3674" opacity="0.44" transform="rotate(7 350.4 361.6)"/>
<ellipse cx="390.2" cy="374.2" rx="6.9" ry="2.3" fill="#0a3674" opacity="0.47" transform="rotate(7 390.2 374.2)"/>
<ellipse cx="361.8" cy="363.1" rx="7.5" ry="1.6" fill="#0a3674" opacity="0.24" transform="rotate(7 361.8 363.1)"/>
<ellipse cx="317.3" cy="353.9" rx="10.1" ry="2.4" fill="#0a3674" opacity="0.25" transform="rotate(7 317.3 353.9)"/>
<ellipse cx="356.8" cy="349.6" rx="12.7" ry="3.0" fill="#0a3674" opacity="0.52" transform="rotate(7 356.8 349.6)"/>
<ellipse cx="355.8" cy="345.6" rx="13.6" ry="2.2" fill="#0a3674" opacity="0.47" transform="rotate(7 355.8 345.6)"/>
<ellipse cx="355.9" cy="356.5" rx="10.1" ry="2.1" fill="#0a3674" opacity="0.41" transform="rotate(7 355.9 356.5)"/>
<ellipse cx="304.8" cy="356.3" rx="12.8" ry="1.8" fill="#0a3674" opacity="0.36" transform="rotate(7 304.8 356.3)"/>
<ellipse cx="407.2" cy="361.3" rx="7.6" ry="1.7" fill="#0a3674" opacity="0.38" transform="rotate(7 407.2 361.3)"/>
<ellipse cx="292.5" cy="359.9" rx="12.4" ry="2.6" fill="#0a3674" opacity="0.50" transform="rotate(7 292.5 359.9)"/>
</g></g>
<g clip-path="url(#s1)"><g filter="url(#b4)">
<path d="M382.4 357.5L406.8 361.8" stroke="#1668c0" stroke-width="1.1" stroke-linecap="round" opacity="0.91"/>
<path d="M368.7 366.9L398.3 369.7" stroke="#0a3874" stroke-width="1.2" stroke-linecap="round" opacity="0.74"/>
<path d="M356.0 355.3L370.3 357.7" stroke="#0a3874" stroke-width="0.9" stroke-linecap="round" opacity="0.65"/>
<path d="M392.6 349.0L411.2 351.0" stroke="#0d4a94" stroke-width="1.8" stroke-linecap="round" opacity="0.80"/>
<path d="M332.8 358.7L356.5 361.7" stroke="#1668c0" stroke-width="1.9" stroke-linecap="round" opacity="0.79"/>
<path d="M362.8 365.8L396.4 368.9" stroke="#0d4a94" stroke-width="0.9" stroke-linecap="round" opacity="0.61"/>
<path d="M352.7 357.7L381.0 360.0" stroke="#0a3874" stroke-width="1.1" stroke-linecap="round" opacity="0.62"/>
<path d="M342.8 356.5L362.7 359.6" stroke="#1668c0" stroke-width="1.7" stroke-linecap="round" opacity="0.53"/>
<path d="M362.3 365.1L373.4 366.5" stroke="#1f86e0" stroke-width="1.9" stroke-linecap="round" opacity="0.89"/>
<path d="M362.0 360.7L382.3 363.3" stroke="#1f86e0" stroke-width="1.4" stroke-linecap="round" opacity="0.77"/>
<path d="M359.3 351.6L385.0 355.7" stroke="#2f9ff2" stroke-width="1.6" stroke-linecap="round" opacity="0.51"/>
<path d="M386.6 363.0L411.8 367.3" stroke="#0a3874" stroke-width="1.2" stroke-linecap="round" opacity="0.90"/>
<path d="M414.5 353.3L448.2 356.3" stroke="#1668c0" stroke-width="1.8" stroke-linecap="round" opacity="0.69"/>
<path d="M332.3 366.6L348.2 369.6" stroke="#1668c0" stroke-width="1.6" stroke-linecap="round" opacity="0.71"/>
<path d="M395.6 371.3L420.1 373.4" stroke="#1668c0" stroke-width="1.3" stroke-linecap="round" opacity="0.55"/>
<path d="M417.4 361.2L431.1 363.0" stroke="#1668c0" stroke-width="1.5" stroke-linecap="round" opacity="0.70"/>
<path d="M331.0 355.8L351.0 359.7" stroke="#1f86e0" stroke-width="1.6" stroke-linecap="round" opacity="0.61"/>
<path d="M289.4 359.7L318.2 363.0" stroke="#1668c0" stroke-width="1.5" stroke-linecap="round" opacity="0.83"/>
<path d="M408.2 355.8L424.9 357.6" stroke="#0a3874" stroke-width="1.1" stroke-linecap="round" opacity="0.94"/>
<path d="M391.1 372.2L402.0 373.1" stroke="#0d4a94" stroke-width="1.1" stroke-linecap="round" opacity="0.51"/>
<path d="M330.4 346.2L347.1 349.4" stroke="#1668c0" stroke-width="1.0" stroke-linecap="round" opacity="0.61"/>
<path d="M420.5 365.1L439.0 367.4" stroke="#1668c0" stroke-width="1.6" stroke-linecap="round" opacity="0.88"/>
<path d="M334.9 344.4L364.3 348.4" stroke="#0a3874" stroke-width="1.6" stroke-linecap="round" opacity="0.68"/>
<path d="M341.1 346.4L371.2 349.9" stroke="#1668c0" stroke-width="1.6" stroke-linecap="round" opacity="0.87"/>
<path d="M315.4 355.7L339.4 360.1" stroke="#1f86e0" stroke-width="0.9" stroke-linecap="round" opacity="0.54"/>
<path d="M368.7 357.9L395.2 362.6" stroke="#2f9ff2" stroke-width="0.8" stroke-linecap="round" opacity="0.64"/>
<path d="M400.5 365.2L427.2 369.7" stroke="#1f86e0" stroke-width="1.6" stroke-linecap="round" opacity="0.63"/>
<path d="M328.3 349.2L355.7 354.4" stroke="#1668c0" stroke-width="1.2" stroke-linecap="round" opacity="0.70"/>
<path d="M345.0 366.7L371.5 370.2" stroke="#2f9ff2" stroke-width="1.7" stroke-linecap="round" opacity="0.64"/>
<path d="M343.0 353.6L375.5 356.6" stroke="#0a3874" stroke-width="1.7" stroke-linecap="round" opacity="0.51"/>
<path d="M373.8 361.2L402.9 366.3" stroke="#1668c0" stroke-width="1.4" stroke-linecap="round" opacity="0.88"/>
<path d="M387.7 352.0L415.9 357.0" stroke="#2f9ff2" stroke-width="1.0" stroke-linecap="round" opacity="0.53"/>
<path d="M342.5 350.4L353.1 351.4" stroke="#0a3874" stroke-width="1.4" stroke-linecap="round" opacity="0.85"/>
<path d="M339.4 344.6L367.1 347.1" stroke="#1668c0" stroke-width="1.5" stroke-linecap="round" opacity="0.56"/>
<path d="M384.1 364.8L400.0 367.0" stroke="#0a3874" stroke-width="1.8" stroke-linecap="round" opacity="0.65"/>
<path d="M364.0 353.9L393.3 358.6" stroke="#1668c0" stroke-width="1.3" stroke-linecap="round" opacity="0.74"/>
<path d="M369.4 363.9L401.3 369.4" stroke="#0a3874" stroke-width="1.9" stroke-linecap="round" opacity="0.66"/>
<path d="M318.7 349.0L330.8 351.4" stroke="#1f86e0" stroke-width="1.5" stroke-linecap="round" opacity="0.74"/>
<path d="M367.9 366.3L388.0 370.2" stroke="#0a3874" stroke-width="1.1" stroke-linecap="round" opacity="0.57"/>
<path d="M368.2 363.8L385.9 366.1" stroke="#0a3874" stroke-width="1.1" stroke-linecap="round" opacity="0.94"/>
<path d="M329.2 348.6L342.0 350.8" stroke="#1f86e0" stroke-width="1.0" stroke-linecap="round" opacity="0.53"/>
<path d="M347.5 358.7L379.3 362.4" stroke="#0d4a94" stroke-width="1.0" stroke-linecap="round" opacity="0.66"/>
<path d="M366.5 361.3L387.9 364.2" stroke="#0a3874" stroke-width="1.8" stroke-linecap="round" opacity="0.68"/>
<path d="M379.6 371.4L404.7 375.9" stroke="#1f86e0" stroke-width="1.3" stroke-linecap="round" opacity="0.68"/>
<path d="M401.1 367.2L429.6 371.1" stroke="#1668c0" stroke-width="1.0" stroke-linecap="round" opacity="0.52"/>
<path d="M395.6 370.0L414.8 373.3" stroke="#2f9ff2" stroke-width="0.9" stroke-linecap="round" opacity="0.92"/>
<path d="M378.3 369.4L410.0 375.0" stroke="#1f86e0" stroke-width="1.6" stroke-linecap="round" opacity="0.77"/>
<path d="M347.8 346.6L365.6 350.0" stroke="#2f9ff2" stroke-width="1.7" stroke-linecap="round" opacity="0.56"/>
<path d="M382.3 364.2L404.7 366.4" stroke="#0d4a94" stroke-width="1.6" stroke-linecap="round" opacity="0.50"/>
<path d="M373.0 368.9L402.7 372.5" stroke="#1668c0" stroke-width="1.5" stroke-linecap="round" opacity="0.74"/>
<path d="M399.6 368.3L411.6 369.3" stroke="#2f9ff2" stroke-width="1.0" stroke-linecap="round" opacity="0.59"/>
<path d="M365.9 366.0L386.4 369.0" stroke="#0d4a94" stroke-width="1.4" stroke-linecap="round" opacity="0.57"/>
<path d="M415.2 359.6L432.6 362.2" stroke="#1668c0" stroke-width="1.9" stroke-linecap="round" opacity="0.80"/>
<path d="M345.0 344.4L358.4 346.5" stroke="#0a3874" stroke-width="1.6" stroke-linecap="round" opacity="0.85"/>
<path d="M318.5 351.5L349.2 354.8" stroke="#1f86e0" stroke-width="1.4" stroke-linecap="round" opacity="0.71"/>
</g></g>
<polygon points="283.8,332.7 348.9,314.1 463.4,328.5 397.0,347.0" fill="#04152f"/>
<g clip-path="url(#s0)"><g filter="url(#b5)">
<ellipse cx="285.5" cy="332.7" rx="12.4" ry="1.8" fill="#0a3674" opacity="0.42" transform="rotate(7 285.5 332.7)"/>
<ellipse cx="357.7" cy="325.3" rx="10.3" ry="1.9" fill="#0a3674" opacity="0.32" transform="rotate(7 357.7 325.3)"/>
<ellipse cx="350.4" cy="332.1" rx="8.1" ry="1.8" fill="#0a3674" opacity="0.46" transform="rotate(7 350.4 332.1)"/>
<ellipse cx="325.1" cy="336.4" rx="10.5" ry="2.6" fill="#0a3674" opacity="0.32" transform="rotate(7 325.1 336.4)"/>
<ellipse cx="437.6" cy="327.7" rx="7.1" ry="1.6" fill="#0a3674" opacity="0.44" transform="rotate(7 437.6 327.7)"/>
<ellipse cx="418.3" cy="327.6" rx="9.2" ry="2.8" fill="#0a3674" opacity="0.41" transform="rotate(7 418.3 327.6)"/>
<ellipse cx="344.5" cy="319.6" rx="7.3" ry="1.7" fill="#0a3674" opacity="0.34" transform="rotate(7 344.5 319.6)"/>
<ellipse cx="297.3" cy="332.3" rx="9.4" ry="2.3" fill="#0a3674" opacity="0.43" transform="rotate(7 297.3 332.3)"/>
<ellipse cx="383.3" cy="340.4" rx="9.1" ry="2.0" fill="#0a3674" opacity="0.34" transform="rotate(7 383.3 340.4)"/>
<ellipse cx="324.6" cy="321.8" rx="11.6" ry="3.0" fill="#0a3674" opacity="0.48" transform="rotate(7 324.6 321.8)"/>
<ellipse cx="384.9" cy="334.9" rx="6.1" ry="2.0" fill="#0a3674" opacity="0.32" transform="rotate(7 384.9 334.9)"/>
<ellipse cx="416.5" cy="325.4" rx="9.0" ry="2.3" fill="#0a3674" opacity="0.48" transform="rotate(7 416.5 325.4)"/>
<ellipse cx="403.6" cy="337.4" rx="7.3" ry="2.6" fill="#0a3674" opacity="0.52" transform="rotate(7 403.6 337.4)"/>
<ellipse cx="388.7" cy="328.6" rx="10.0" ry="1.7" fill="#0a3674" opacity="0.45" transform="rotate(7 388.7 328.6)"/>
<ellipse cx="428.3" cy="337.9" rx="11.7" ry="2.8" fill="#0a3674" opacity="0.27" transform="rotate(7 428.3 337.9)"/>
<ellipse cx="416.3" cy="339.4" rx="7.6" ry="1.6" fill="#0a3674" opacity="0.29" transform="rotate(7 416.3 339.4)"/>
<ellipse cx="369.5" cy="335.4" rx="8.6" ry="2.9" fill="#0a3674" opacity="0.33" transform="rotate(7 369.5 335.4)"/>
<ellipse cx="393.8" cy="323.1" rx="13.8" ry="1.7" fill="#0a3674" opacity="0.52" transform="rotate(7 393.8 323.1)"/>
<ellipse cx="374.6" cy="332.4" rx="10.5" ry="1.9" fill="#0a3674" opacity="0.52" transform="rotate(7 374.6 332.4)"/>
<ellipse cx="409.3" cy="343.6" rx="10.8" ry="1.7" fill="#0a3674" opacity="0.49" transform="rotate(7 409.3 343.6)"/>
<ellipse cx="323.5" cy="334.9" rx="7.9" ry="2.4" fill="#0a3674" opacity="0.49" transform="rotate(7 323.5 334.9)"/>
</g></g>
<g clip-path="url(#s0)"><g filter="url(#b4)">
<path d="M328.6 326.2L340.4 327.7" stroke="#0d4a94" stroke-width="1.7" stroke-linecap="round" opacity="0.92"/>
<path d="M440.2 328.9L468.3 333.2" stroke="#0a3874" stroke-width="1.5" stroke-linecap="round" opacity="0.84"/>
<path d="M334.8 323.5L345.6 324.6" stroke="#0a3874" stroke-width="1.2" stroke-linecap="round" opacity="0.65"/>
<path d="M331.9 318.0L364.2 323.1" stroke="#0d4a94" stroke-width="0.8" stroke-linecap="round" opacity="0.80"/>
<path d="M290.8 332.5L315.2 335.5" stroke="#1f86e0" stroke-width="1.8" stroke-linecap="round" opacity="0.91"/>
<path d="M378.7 328.3L395.5 331.3" stroke="#1f86e0" stroke-width="1.7" stroke-linecap="round" opacity="0.68"/>
<path d="M345.9 328.6L377.6 333.1" stroke="#1668c0" stroke-width="1.3" stroke-linecap="round" opacity="0.91"/>
<path d="M368.4 317.4L395.8 322.0" stroke="#0a3874" stroke-width="1.5" stroke-linecap="round" opacity="0.84"/>
<path d="M339.3 328.5L351.0 330.6" stroke="#1668c0" stroke-width="1.1" stroke-linecap="round" opacity="0.89"/>
<path d="M423.0 336.0L435.6 337.9" stroke="#0a3874" stroke-width="1.5" stroke-linecap="round" opacity="0.92"/>
<path d="M370.8 342.8L398.3 347.9" stroke="#1668c0" stroke-width="1.3" stroke-linecap="round" opacity="0.86"/>
<path d="M313.9 330.1L337.5 332.3" stroke="#1668c0" stroke-width="1.7" stroke-linecap="round" opacity="0.56"/>
<path d="M343.5 338.7L353.6 340.4" stroke="#0a3874" stroke-width="0.8" stroke-linecap="round" opacity="0.58"/>
<path d="M358.7 327.4L381.4 330.2" stroke="#1f86e0" stroke-width="1.4" stroke-linecap="round" opacity="0.52"/>
<path d="M285.3 330.4L302.7 332.1" stroke="#1f86e0" stroke-width="1.7" stroke-linecap="round" opacity="0.85"/>
<path d="M421.0 328.9L451.6 332.1" stroke="#0d4a94" stroke-width="1.7" stroke-linecap="round" opacity="0.66"/>
<path d="M376.3 321.9L407.4 326.3" stroke="#0a3874" stroke-width="1.1" stroke-linecap="round" opacity="0.93"/>
<path d="M409.7 338.6L427.0 341.9" stroke="#1668c0" stroke-width="1.1" stroke-linecap="round" opacity="0.69"/>
<path d="M411.3 330.8L444.2 335.1" stroke="#1f86e0" stroke-width="1.0" stroke-linecap="round" opacity="0.89"/>
<path d="M309.5 327.5L325.9 329.8" stroke="#0a3874" stroke-width="1.1" stroke-linecap="round" opacity="0.62"/>
<path d="M400.4 334.2L413.2 336.7" stroke="#0a3874" stroke-width="1.8" stroke-linecap="round" opacity="0.58"/>
<path d="M353.1 317.2L379.2 322.4" stroke="#1f86e0" stroke-width="1.3" stroke-linecap="round" opacity="0.74"/>
<path d="M394.5 320.8L418.9 324.3" stroke="#2f9ff2" stroke-width="1.3" stroke-linecap="round" opacity="0.76"/>
<path d="M296.1 334.0L310.7 335.7" stroke="#1f86e0" stroke-width="1.4" stroke-linecap="round" opacity="0.58"/>
<path d="M381.9 344.4L392.7 346.4" stroke="#1f86e0" stroke-width="1.4" stroke-linecap="round" opacity="0.50"/>
<path d="M441.3 327.4L452.8 328.7" stroke="#1668c0" stroke-width="1.3" stroke-linecap="round" opacity="0.51"/>
<path d="M315.8 331.8L341.0 335.6" stroke="#1f86e0" stroke-width="1.6" stroke-linecap="round" opacity="0.55"/>
<path d="M343.7 330.8L366.8 334.8" stroke="#2f9ff2" stroke-width="1.7" stroke-linecap="round" opacity="0.61"/>
<path d="M378.5 323.9L402.5 326.6" stroke="#1f86e0" stroke-width="1.0" stroke-linecap="round" opacity="0.94"/>
<path d="M310.2 321.7L341.3 324.7" stroke="#1668c0" stroke-width="0.8" stroke-linecap="round" opacity="0.72"/>
<path d="M361.8 327.9L378.1 329.3" stroke="#0d4a94" stroke-width="1.8" stroke-linecap="round" opacity="0.76"/>
<path d="M351.7 336.0L367.4 337.3" stroke="#1f86e0" stroke-width="1.3" stroke-linecap="round" opacity="0.81"/>
<path d="M380.3 338.3L409.0 340.9" stroke="#1f86e0" stroke-width="1.7" stroke-linecap="round" opacity="0.58"/>
<path d="M354.4 319.6L381.0 321.9" stroke="#1f86e0" stroke-width="1.3" stroke-linecap="round" opacity="0.66"/>
<path d="M305.0 334.3L316.0 336.2" stroke="#1f86e0" stroke-width="1.5" stroke-linecap="round" opacity="0.56"/>
<path d="M383.4 332.7L417.0 336.4" stroke="#0d4a94" stroke-width="1.8" stroke-linecap="round" opacity="0.56"/>
<path d="M364.4 323.3L384.6 327.3" stroke="#1668c0" stroke-width="1.5" stroke-linecap="round" opacity="0.82"/>
<path d="M412.2 338.3L429.3 340.8" stroke="#1668c0" stroke-width="1.1" stroke-linecap="round" opacity="0.71"/>
<path d="M422.9 333.5L441.0 335.1" stroke="#0a3874" stroke-width="1.2" stroke-linecap="round" opacity="0.79"/>
<path d="M319.9 319.5L346.6 323.1" stroke="#1f86e0" stroke-width="1.2" stroke-linecap="round" opacity="0.88"/>
<path d="M334.1 333.3L349.3 335.0" stroke="#1668c0" stroke-width="1.7" stroke-linecap="round" opacity="0.86"/>
<path d="M365.7 326.8L390.0 330.1" stroke="#2f9ff2" stroke-width="1.3" stroke-linecap="round" opacity="0.78"/>
<path d="M326.5 324.8L349.5 326.8" stroke="#0a3874" stroke-width="1.6" stroke-linecap="round" opacity="0.66"/>
<path d="M371.9 317.4L386.3 319.4" stroke="#2f9ff2" stroke-width="1.4" stroke-linecap="round" opacity="0.79"/>
<path d="M361.4 318.6L372.8 319.7" stroke="#1668c0" stroke-width="1.1" stroke-linecap="round" opacity="0.88"/>
<path d="M282.5 333.0L312.7 335.7" stroke="#1f86e0" stroke-width="1.8" stroke-linecap="round" opacity="0.65"/>
<path d="M397.7 334.0L409.0 335.7" stroke="#0a3874" stroke-width="1.3" stroke-linecap="round" opacity="0.58"/>
<path d="M391.9 322.9L406.9 324.9" stroke="#0a3874" stroke-width="1.4" stroke-linecap="round" opacity="0.56"/>
<path d="M399.1 327.8L426.6 330.5" stroke="#0a3874" stroke-width="1.0" stroke-linecap="round" opacity="0.63"/>
<path d="M394.5 330.9L413.8 332.9" stroke="#1668c0" stroke-width="1.1" stroke-linecap="round" opacity="0.66"/>
<path d="M365.7 317.2L376.2 318.7" stroke="#1f86e0" stroke-width="1.7" stroke-linecap="round" opacity="0.94"/>
<path d="M323.4 328.5L355.4 333.2" stroke="#0a3874" stroke-width="1.2" stroke-linecap="round" opacity="0.55"/>
<path d="M398.8 330.9L427.6 333.5" stroke="#2f9ff2" stroke-width="1.3" stroke-linecap="round" opacity="0.68"/>
<path d="M321.9 320.6L339.8 323.6" stroke="#1f86e0" stroke-width="1.0" stroke-linecap="round" opacity="0.92"/>
<path d="M312.8 330.0L331.2 332.6" stroke="#0a3874" stroke-width="1.6" stroke-linecap="round" opacity="0.91"/>
<path d="M401.8 333.3L417.9 335.9" stroke="#2f9ff2" stroke-width="0.8" stroke-linecap="round" opacity="0.68"/>
<path d="M376.7 319.3L396.4 321.8" stroke="#0d4a94" stroke-width="1.7" stroke-linecap="round" opacity="0.63"/>
<path d="M367.7 340.2L379.4 341.7" stroke="#0d4a94" stroke-width="1.8" stroke-linecap="round" opacity="0.75"/>
<path d="M328.2 329.4L342.6 331.2" stroke="#1f86e0" stroke-width="1.2" stroke-linecap="round" opacity="0.90"/>
<path d="M298.8 326.5L314.0 328.9" stroke="#1668c0" stroke-width="1.5" stroke-linecap="round" opacity="0.68"/>
<path d="M363.5 323.3L393.5 327.1" stroke="#1f86e0" stroke-width="1.8" stroke-linecap="round" opacity="0.52"/>
<path d="M322.7 324.3L340.1 326.7" stroke="#1668c0" stroke-width="0.8" stroke-linecap="round" opacity="0.77"/>
<path d="M355.3 321.3L370.6 324.2" stroke="#0d4a94" stroke-width="1.9" stroke-linecap="round" opacity="0.50"/>
<path d="M342.1 335.6L370.4 340.0" stroke="#1668c0" stroke-width="1.4" stroke-linecap="round" opacity="0.87"/>
<path d="M429.0 333.2L447.3 335.3" stroke="#0d4a94" stroke-width="1.6" stroke-linecap="round" opacity="0.81"/>
</g></g>
<g filter="url(#b3)">
<ellipse cx="347" cy="337.5" rx="5" ry="1.8" fill="#3aa8f5"/>
<ellipse cx="343" cy="366.5" rx="5" ry="1.8" fill="#3aa8f5"/>
<ellipse cx="345" cy="409" rx="4" ry="1.5" fill="#2f9ff2"/>
<ellipse cx="371" cy="330" rx="4" ry="1.5" fill="#2f9ff2"/>
<ellipse cx="372" cy="345" rx="4" ry="1.3" fill="#2f9ff2"/>
<ellipse cx="391" cy="361" rx="3.5" ry="1.3" fill="#2f9ff2"/>
<ellipse cx="420" cy="324" rx="8" ry="1.5" fill="#1f86e0"/>
<ellipse cx="436" cy="327" rx="6" ry="1.3" fill="#2f9ff2"/>
</g>
<polygon points="397.0,347.0 463.4,328.5 463.4,399.1 397.0,417.6" fill="#030f27"/>
<g clip-path="url(#fr)" filter="url(#b3)">
<rect x="397.5" y="320" width="4" height="110" fill="#072a5e"/>
<rect x="408.2" y="320" width="1.6" height="110" fill="#1b74cc"/>
<rect x="410.2" y="320" width="1.2" height="110" fill="#0b4288"/>
<rect x="426" y="320" width="7" height="110" fill="#051d44"/>
<rect x="446" y="320" width="2.5" height="110" fill="#0a3874"/>
<rect x="450.5" y="320" width="1.5" height="110" fill="#093268"/>
<rect x="455" y="320" width="6" height="110" fill="#072a5c"/>
<rect x="437" y="320" width="3" height="110" fill="#04183a"/>
</g>
<path d="M279.5 323V410.8" stroke="#1c1c1c" stroke-width="0.95" fill="none"/>
<path d="M279.7 411.0L409.3 426" stroke="#444" stroke-width="0.5" fill="none" stroke-dasharray="4 1"/>
<path d="M409.3 426L495 401.5" stroke="#444" stroke-width="0.5" fill="none" stroke-dasharray="4 1"/>
<path d="M279.7 323l1.6 -2.3M279.7 323l-1.8 -2" stroke="#777" stroke-width="0.4" fill="none"/>
<path d="M279.7 326.2h-1.6" stroke="#444" stroke-width="0.5"/>
<path d="M279.7 340.2h-1.6" stroke="#444" stroke-width="0.5"/>
<path d="M279.7 354.2h-1.6" stroke="#444" stroke-width="0.5"/>
<path d="M279.7 368.2h-1.6" stroke="#444" stroke-width="0.5"/>
<path d="M279.7 382.2h-1.6" stroke="#444" stroke-width="0.5"/>
<path d="M279.7 396.2h-1.6" stroke="#444" stroke-width="0.5"/>
<path d="M279.7 410.2h-1.6" stroke="#444" stroke-width="0.5"/>
</svg>
<div class="ln" style="left:510.00px;top:249.00px;width:2.50px;height:0.90px;background:#bdbdbd"></div>
<div class="ln" style="left:544.00px;top:249.00px;width:246.50px;height:0.90px;background:#bdbdbd"></div>
<div class="ln" style="left:790.00px;top:249.00px;width:0.90px;height:197.00px;background:#b9b9b9"></div>
<svg width="800" height="452" viewBox="0 0 800 452">
<path d="M578.0 268.6H734.2" stroke="#1c1c1c" stroke-width="1.1" fill="none"/>
<path d="M578.0 424.35H734.2" stroke="#1a1a1a" stroke-width="1.05" fill="none"/>
<rect x="733.5" y="283.78" width="0.8" height="0.7" fill="#bbb"/>
<rect x="577.8" y="299.35" width="0.9" height="0.8" fill="#555"/>
<rect x="733.5" y="299.35" width="0.9" height="0.8" fill="#222"/>
<rect x="577.8" y="314.93" width="0.9" height="0.8" fill="#555"/>
<rect x="733.5" y="314.93" width="0.9" height="0.8" fill="#222"/>
<rect x="733.5" y="330.50" width="0.8" height="0.7" fill="#bbb"/>
<rect x="733.5" y="346.08" width="0.8" height="0.7" fill="#bbb"/>
<rect x="733.5" y="361.65" width="0.8" height="0.7" fill="#bbb"/>
<rect x="577.8" y="377.23" width="0.9" height="0.8" fill="#555"/>
<rect x="733.5" y="377.23" width="0.9" height="0.8" fill="#222"/>
<rect x="577.8" y="392.80" width="0.9" height="0.8" fill="#555"/>
<rect x="733.5" y="392.80" width="0.9" height="0.8" fill="#222"/>
<rect x="733.5" y="408.38" width="0.8" height="0.7" fill="#bbb"/>
<path d="M592.91 424.35v-1.4M592.91 268.6v1.4" stroke="#333" stroke-width="0.5" fill="none"/>
<path d="M608.61 424.35v-1.4M608.61 268.6v1.4" stroke="#333" stroke-width="0.5" fill="none"/>
<path d="M624.31 424.35v-1.4M624.31 268.6v1.4" stroke="#333" stroke-width="0.5" fill="none"/>
<path d="M640.01 424.35v-1.4M640.01 268.6v1.4" stroke="#333" stroke-width="0.5" fill="none"/>
<path d="M655.71 424.35v-1.4M655.71 268.6v1.4" stroke="#333" stroke-width="0.5" fill="none"/>
<path d="M671.41 424.35v-1.4M671.41 268.6v1.4" stroke="#333" stroke-width="0.5" fill="none"/>
<path d="M687.10 424.35v-1.4M687.10 268.6v1.4" stroke="#333" stroke-width="0.5" fill="none"/>
<path d="M702.80 424.35v-1.4M702.80 268.6v1.4" stroke="#333" stroke-width="0.5" fill="none"/>
<path d="M718.50 424.35v-1.4M718.50 268.6v1.4" stroke="#333" stroke-width="0.5" fill="none"/>
<path d="M734.20 424.35v-1.4M734.20 268.6v1.4" stroke="#333" stroke-width="0.5" fill="none"/>
<rect x="576.3" y="343.9" width="158.70000000000005" height="4.1" fill="#1173c1"/>
<ellipse cx="581.0" cy="345.3" rx="1.5" ry="0.75" fill="#9ccbee"/>
<ellipse cx="587.5" cy="345.3" rx="1.5" ry="0.75" fill="#9ccbee"/>
<ellipse cx="594.0" cy="345.3" rx="1.5" ry="0.75" fill="#9ccbee"/>
<ellipse cx="600.5" cy="345.3" rx="1.5" ry="0.75" fill="#9ccbee"/>
<ellipse cx="607.0" cy="345.3" rx="1.5" ry="0.75" fill="#9ccbee"/>
<ellipse cx="613.5" cy="345.3" rx="1.5" ry="0.75" fill="#9ccbee"/>
<ellipse cx="620.0" cy="345.3" rx="1.5" ry="0.75" fill="#9ccbee"/>
<ellipse cx="626.5" cy="345.3" rx="1.5" ry="0.75" fill="#9ccbee"/>
<ellipse cx="633.0" cy="345.3" rx="1.5" ry="0.75" fill="#9ccbee"/>
<ellipse cx="639.5" cy="345.3" rx="1.5" ry="0.75" fill="#9ccbee"/>
<ellipse cx="646.0" cy="345.3" rx="1.5" ry="0.75" fill="#9ccbee"/>
<ellipse cx="652.5" cy="345.3" rx="1.5" ry="0.75" fill="#9ccbee"/>
<ellipse cx="659.0" cy="345.3" rx="1.5" ry="0.75" fill="#9ccbee"/>
<ellipse cx="665.5" cy="345.3" rx="1.5" ry="0.75" fill="#9ccbee"/>
<ellipse cx="672.0" cy="345.3" rx="1.5" ry="0.75" fill="#9ccbee"/>
<ellipse cx="678.5" cy="345.3" rx="1.5" ry="0.75" fill="#9ccbee"/>
<ellipse cx="685.0" cy="345.3" rx="1.5" ry="0.75" fill="#9ccbee"/>
<ellipse cx="691.5" cy="345.3" rx="1.5" ry="0.75" fill="#9ccbee"/>
<ellipse cx="698.0" cy="345.3" rx="1.5" ry="0.75" fill="#9ccbee"/>
<ellipse cx="704.5" cy="345.3" rx="1.5" ry="0.75" fill="#9ccbee"/>
<ellipse cx="711.0" cy="345.3" rx="1.5" ry="0.75" fill="#9ccbee"/>
<ellipse cx="717.5" cy="345.3" rx="1.5" ry="0.75" fill="#9ccbee"/>
<ellipse cx="724.0" cy="345.3" rx="1.5" ry="0.75" fill="#9ccbee"/>
<ellipse cx="730.5" cy="345.3" rx="1.5" ry="0.75" fill="#9ccbee"/>
</svg>
<div class="ln" style="left:0.00px;top:450.30px;width:800.00px;height:1.70px;background:#e2e2e2"></div>
<div class="ln" style="left:0.00px;top:450.00px;width:800.00px;height:0.60px;background:#cfcfcf"></div>
<div class="ln" style="left:799.20px;top:0.00px;width:0.80px;height:452.00px;background:#dadada"></div>
<svg width="800" height="452" viewBox="0 0 800 452"><text x="6.60" y="7" font-size="4.9" fill="#151515" stroke="#151515" stroke-width="0.12" text-anchor="start">simsMVA</text>
<text x="0.70" y="17" font-size="4.85" fill="#151515" stroke="#151515" stroke-width="0.12" text-anchor="start">New tab</text>
<text x="26.30" y="17" font-size="4.85" fill="#151515" stroke="#151515" stroke-width="0.12" text-anchor="start">Theme</text>
<text x="48.10" y="17" font-size="4.85" fill="#151515" stroke="#151515" stroke-width="0.12" text-anchor="start">Examples</text>
<text x="76.20" y="17" font-size="4.85" fill="#151515" stroke="#151515" stroke-width="0.12" text-anchor="start">Help</text>
<text x="8.00" y="29" font-size="4.85" fill="#151515" stroke="#151515" stroke-width="0.12" text-anchor="middle">Home</text>
<text x="30.25" y="29" font-size="4.85" fill="#151515" stroke="#151515" stroke-width="0.12" text-anchor="middle">*Example*</text>
<text x="82.50" y="29" font-size="4.85" fill="#151515" stroke="#151515" stroke-width="0.12" text-anchor="middle">*Example*/NMF Image Results #1</text>
<text x="135.25" y="29" font-size="4.85" fill="#151515" stroke="#151515" stroke-width="0.12" text-anchor="middle">*Example*</text>
<text x="183.85" y="28" font-size="4.85" fill="#151515" stroke="#151515" stroke-width="0.12" text-anchor="middle">*Example*/NMF3D Results #1</text>
<text x="9.00" y="48" font-size="6.55" fill="#151515" stroke="#151515" stroke-width="0.12" text-anchor="start">Spectra</text>
<text x="19.60" y="60" font-size="6.05" fill="#151515" stroke="#151515" stroke-width="0.12" text-anchor="start">Diverging 2</text>
<path d="M81.70 56.30L83.20 57.80L84.70 56.30" stroke="#444" stroke-width="0.6" fill="none"/>
<text x="92.50" y="60" font-size="6.05" fill="#151515" stroke="#151515" stroke-width="0.12" text-anchor="start">Spectrum 1</text>
<path d="M162.60 56.30L164.10 57.80L165.60 56.30" stroke="#444" stroke-width="0.6" fill="none"/>
<text x="176.50" y="60" font-size="6.05" fill="#151515" stroke="#151515" stroke-width="0.12" text-anchor="start">Normalised</text>
<path d="M231.20 56.30L232.70 57.80L234.20 56.30" stroke="#444" stroke-width="0.6" fill="none"/>
<text x="268.90" y="62" font-size="6.0" fill="#151515" stroke="#151515" stroke-width="0.12" text-anchor="middle">Split on/off</text>
<text x="327.65" y="62" font-size="6.0" fill="#151515" stroke="#151515" stroke-width="0.12" text-anchor="middle">Labels/Masses</text>
<text x="378.45" y="62" font-size="6.0" fill="#151515" stroke="#151515" stroke-width="0.12" text-anchor="middle">IU</text>
<text x="413.80" y="62" font-size="6.0" fill="#151515" stroke="#151515" stroke-width="0.12" text-anchor="middle">Export</text>
<text x="445.50" y="62" font-size="6.0" fill="#151515" stroke="#151515" stroke-width="0.12" text-anchor="middle">Grid</text>
<text x="484.75" y="62" font-size="6.0" fill="#151515" stroke="#151515" stroke-width="0.12" text-anchor="middle">Magnify</text>
<text x="531.45" y="62" font-size="6.0" fill="#151515" stroke="#151515" stroke-width="0.12" text-anchor="middle">Reset</text>
<text x="770.80" y="62" font-size="6.0" fill="#151515" stroke="#151515" stroke-width="0.12" text-anchor="middle">&gt;</text>
<text x="633.30" y="57" font-size="6.2" fill="#151515" stroke="#151515" stroke-width="0.12" text-anchor="middle">Labels Threshold</text>
<text x="89.70" y="201" font-size="5.25" fill="#151515" stroke="#151515" stroke-width="0.12" text-anchor="end">0</text>
<text x="89.70" y="187" font-size="5.25" fill="#151515" stroke="#151515" stroke-width="0.12" text-anchor="end">0.2</text>
<text x="89.70" y="172" font-size="5.25" fill="#151515" stroke="#151515" stroke-width="0.12" text-anchor="end">0.4</text>
<text x="89.70" y="158" font-size="5.25" fill="#151515" stroke="#151515" stroke-width="0.12" text-anchor="end">0.6</text>
<text x="89.70" y="144" font-size="5.25" fill="#151515" stroke="#151515" stroke-width="0.12" text-anchor="end">0.8</text>
<text x="89.70" y="130" font-size="5.25" fill="#151515" stroke="#151515" stroke-width="0.12" text-anchor="end">1</text>
<text x="89.70" y="116" font-size="5.25" fill="#151515" stroke="#151515" stroke-width="0.12" text-anchor="end">1.2</text>
<text x="89.70" y="102" font-size="5.25" fill="#151515" stroke="#151515" stroke-width="0.12" text-anchor="end">1.4</text>
<text x="91.40" y="206" font-size="5.25" fill="#151515" stroke="#151515" stroke-width="0.12" text-anchor="middle">0</text>
<text x="295.93" y="206" font-size="5.25" fill="#151515" stroke="#151515" stroke-width="0.12" text-anchor="middle">50</text>
<text x="500.47" y="206" font-size="5.25" fill="#151515" stroke="#151515" stroke-width="0.12" text-anchor="middle">100</text>
<text x="705.00" y="206" font-size="5.25" fill="#151515" stroke="#151515" stroke-width="0.12" text-anchor="middle">150</text>
<text x="398.50" y="215" font-size="6.05" fill="#151515" stroke="#151515" stroke-width="0.12" text-anchor="middle">mass / u</text>
<text x="398.60" y="96" font-size="6.3" fill="#151515" stroke="#151515" stroke-width="0.12" text-anchor="middle" font-weight="bold">Spectrum 1</text>
<text x="8.60" y="252" font-size="6.35" fill="#151515" stroke="#151515" stroke-width="0.12" text-anchor="start">Intensities</text>
<text x="33.00" y="266" font-size="6.05" fill="#151515" stroke="#151515" stroke-width="0.12" text-anchor="start">Component 3</text>
<path d="M120.00 263.30L121.50 264.80L123.00 263.30" stroke="#444" stroke-width="0.6" fill="none"/>
<text x="33.00" y="285" font-size="6.05" fill="#151515" stroke="#151515" stroke-width="0.12" text-anchor="start">5</text>
<path d="M120.00 282.30L121.50 283.80L123.00 282.30" stroke="#444" stroke-width="0.6" fill="none"/>
<text x="174.65" y="266" font-size="6.0" fill="#151515" stroke="#151515" stroke-width="0.12" text-anchor="middle">Overlay</text>
<text x="233.75" y="266" font-size="6.0" fill="#151515" stroke="#151515" stroke-width="0.12" text-anchor="middle">Profile view</text>
<text x="293.40" y="266" font-size="6.0" fill="#151515" stroke="#151515" stroke-width="0.12" text-anchor="middle">3D view</text>
<text x="352.90" y="266" font-size="6.0" fill="#151515" stroke="#151515" stroke-width="0.12" text-anchor="middle">Montage</text>
<text x="412.50" y="266" font-size="6.0" fill="#151515" stroke="#151515" stroke-width="0.12" text-anchor="middle">Z-correction</text>
<text x="174.65" y="285" font-size="6.0" fill="#151515" stroke="#151515" stroke-width="0.12" text-anchor="middle">Split on/off</text>
<text x="233.75" y="285" font-size="6.0" fill="#151515" stroke="#151515" stroke-width="0.12" text-anchor="middle">Level overlay</text>
<text x="293.40" y="285" font-size="6.0" fill="#151515" stroke="#151515" stroke-width="0.12" text-anchor="middle">3D overlay</text>
<text x="352.90" y="285" font-size="6.0" fill="#151515" stroke="#151515" stroke-width="0.12" text-anchor="middle">Video</text>
<text x="484.05" y="266" font-size="6.0" fill="#151515" stroke="#151515" stroke-width="0.12" text-anchor="middle">-&gt;</text>
<text x="393.70" y="285" font-size="6.2" fill="#151515" stroke="#151515" stroke-width="0.12" text-anchor="start">Oranges</text>
<path d="M431.30 282.30L432.80 283.80L434.30 282.30" stroke="#444" stroke-width="0.6" fill="none"/>
<text x="443.70" y="285" font-size="6.2" fill="#151515" stroke="#151515" stroke-width="0.12" text-anchor="start">No normali...</text>
<path d="M481.20 282.30L482.70 283.80L484.20 282.30" stroke="#444" stroke-width="0.6" fill="none"/>
<text x="124.00" y="299" font-size="6.25" fill="#151515" stroke="#151515" stroke-width="0.12" text-anchor="middle" font-weight="bold">Component 3</text>
<text x="205.00" y="429" font-size="5.25" fill="#151515" stroke="#151515" stroke-width="0.12" text-anchor="start">0</text>
<text x="205.00" y="413" font-size="5.25" fill="#151515" stroke="#151515" stroke-width="0.12" text-anchor="start">1</text>
<text x="205.00" y="397" font-size="5.25" fill="#151515" stroke="#151515" stroke-width="0.12" text-anchor="start">2</text>
<text x="205.00" y="380" font-size="5.25" fill="#151515" stroke="#151515" stroke-width="0.12" text-anchor="start">3</text>
<text x="205.00" y="364" font-size="5.25" fill="#151515" stroke="#151515" stroke-width="0.12" text-anchor="start">4</text>
<text x="205.00" y="348" font-size="5.25" fill="#151515" stroke="#151515" stroke-width="0.12" text-anchor="start">5</text>
<text x="205.00" y="332" font-size="5.25" fill="#151515" stroke="#151515" stroke-width="0.12" text-anchor="start">6</text>
<text x="205.00" y="316" font-size="5.25" fill="#151515" stroke="#151515" stroke-width="0.12" text-anchor="start">7</text>
<text x="80.11" y="434" font-size="5.25" fill="#151515" stroke="#151515" stroke-width="0.12" text-anchor="middle">10</text>
<text x="59.20" y="323" font-size="5.25" fill="#151515" stroke="#151515" stroke-width="0.12" text-anchor="end">10</text>
<text x="99.48" y="434" font-size="5.25" fill="#151515" stroke="#151515" stroke-width="0.12" text-anchor="middle">20</text>
<text x="59.20" y="342" font-size="5.25" fill="#151515" stroke="#151515" stroke-width="0.12" text-anchor="end">20</text>
<text x="118.86" y="434" font-size="5.25" fill="#151515" stroke="#151515" stroke-width="0.12" text-anchor="middle">30</text>
<text x="59.20" y="362" font-size="5.25" fill="#151515" stroke="#151515" stroke-width="0.12" text-anchor="end">30</text>
<text x="138.23" y="434" font-size="5.25" fill="#151515" stroke="#151515" stroke-width="0.12" text-anchor="middle">40</text>
<text x="59.20" y="381" font-size="5.25" fill="#151515" stroke="#151515" stroke-width="0.12" text-anchor="end">40</text>
<text x="157.61" y="434" font-size="5.25" fill="#151515" stroke="#151515" stroke-width="0.12" text-anchor="middle">50</text>
<text x="59.20" y="401" font-size="5.25" fill="#151515" stroke="#151515" stroke-width="0.12" text-anchor="end">50</text>
<text x="176.98" y="434" font-size="5.25" fill="#151515" stroke="#151515" stroke-width="0.12" text-anchor="middle">60</text>
<text x="59.20" y="420" font-size="5.25" fill="#151515" stroke="#151515" stroke-width="0.12" text-anchor="end">60</text>
<text x="274.40" y="328" font-size="5.25" fill="#151515" stroke="#151515" stroke-width="0.12" text-anchor="end">0</text>
<text x="274.40" y="342" font-size="5.25" fill="#151515" stroke="#151515" stroke-width="0.12" text-anchor="end">2</text>
<text x="274.40" y="356" font-size="5.25" fill="#151515" stroke="#151515" stroke-width="0.12" text-anchor="end">4</text>
<text x="274.40" y="370" font-size="5.25" fill="#151515" stroke="#151515" stroke-width="0.12" text-anchor="end">6</text>
<text x="274.40" y="384" font-size="5.25" fill="#151515" stroke="#151515" stroke-width="0.12" text-anchor="end">8</text>
<text x="274.40" y="398" font-size="5.25" fill="#151515" stroke="#151515" stroke-width="0.12" text-anchor="end">10</text>
<text x="274.40" y="412" font-size="5.25" fill="#151515" stroke="#151515" stroke-width="0.12" text-anchor="end">12</text>
<text x="272.70" y="417" font-size="5.25" fill="#151515" stroke="#151515" stroke-width="0.12" text-anchor="middle">0</text>
<text x="288.50" y="420" font-size="5.25" fill="#151515" stroke="#151515" stroke-width="0.12" text-anchor="middle">10</text>
<text x="307.00" y="423" font-size="5.25" fill="#151515" stroke="#151515" stroke-width="0.12" text-anchor="middle">20</text>
<text x="325.20" y="425" font-size="5.25" fill="#151515" stroke="#151515" stroke-width="0.12" text-anchor="middle">30</text>
<text x="343.80" y="427" font-size="5.25" fill="#151515" stroke="#151515" stroke-width="0.12" text-anchor="middle">40</text>
<text x="362.00" y="430" font-size="5.25" fill="#151515" stroke="#151515" stroke-width="0.12" text-anchor="middle">50</text>
<text x="380.20" y="432" font-size="5.25" fill="#151515" stroke="#151515" stroke-width="0.12" text-anchor="middle">60</text>
<text x="398.00" y="434" font-size="5.25" fill="#151515" stroke="#151515" stroke-width="0.12" text-anchor="middle">70</text>
<text x="413.80" y="433" font-size="5.25" fill="#151515" stroke="#151515" stroke-width="0.12" text-anchor="middle">0</text>
<text x="435.50" y="427" font-size="5.25" fill="#151515" stroke="#151515" stroke-width="0.12" text-anchor="middle">20</text>
<text x="457.20" y="421" font-size="5.25" fill="#151515" stroke="#151515" stroke-width="0.12" text-anchor="middle">40</text>
<text x="479.20" y="415" font-size="5.25" fill="#151515" stroke="#151515" stroke-width="0.12" text-anchor="middle">60</text>
<text x="499.50" y="408" font-size="5.25" fill="#151515" stroke="#151515" stroke-width="0.12" text-anchor="middle">80</text>
<text x="513.60" y="253" font-size="6.55" fill="#151515" stroke="#151515" stroke-width="0.12" text-anchor="start">Lack-of-fit</text>
<text x="575.00" y="271" font-size="5.25" fill="#151515" stroke="#151515" stroke-width="0.12" text-anchor="end">1</text>
<text x="575.00" y="286" font-size="5.25" fill="#151515" stroke="#151515" stroke-width="0.12" text-anchor="end">0.8</text>
<text x="575.00" y="302" font-size="5.25" fill="#151515" stroke="#151515" stroke-width="0.12" text-anchor="end">0.6</text>
<text x="575.00" y="317" font-size="5.25" fill="#151515" stroke="#151515" stroke-width="0.12" text-anchor="end">0.4</text>
<text x="575.00" y="333" font-size="5.25" fill="#151515" stroke="#151515" stroke-width="0.12" text-anchor="end">0.2</text>
<text x="575.00" y="349" font-size="5.25" fill="#151515" stroke="#151515" stroke-width="0.12" text-anchor="end">0</text>
<text x="575.00" y="364" font-size="5.25" fill="#151515" stroke="#151515" stroke-width="0.12" text-anchor="end">-0.2</text>
<text x="575.00" y="380" font-size="5.25" fill="#151515" stroke="#151515" stroke-width="0.12" text-anchor="end">-0.4</text>
<text x="575.00" y="395" font-size="5.25" fill="#151515" stroke="#151515" stroke-width="0.12" text-anchor="end">-0.6</text>
<text x="575.00" y="411" font-size="5.25" fill="#151515" stroke="#151515" stroke-width="0.12" text-anchor="end">-0.8</text>
<text x="575.00" y="426" font-size="5.25" fill="#151515" stroke="#151515" stroke-width="0.12" text-anchor="end">-1</text>
<text x="592.91" y="433" font-size="5.25" fill="#151515" stroke="#151515" stroke-width="0.12" text-anchor="middle">20</text>
<text x="608.61" y="433" font-size="5.25" fill="#151515" stroke="#151515" stroke-width="0.12" text-anchor="middle">40</text>
<text x="624.31" y="433" font-size="5.25" fill="#151515" stroke="#151515" stroke-width="0.12" text-anchor="middle">60</text>
<text x="640.01" y="433" font-size="5.25" fill="#151515" stroke="#151515" stroke-width="0.12" text-anchor="middle">80</text>
<text x="655.71" y="433" font-size="5.25" fill="#151515" stroke="#151515" stroke-width="0.12" text-anchor="middle">100</text>
<text x="671.41" y="433" font-size="5.25" fill="#151515" stroke="#151515" stroke-width="0.12" text-anchor="middle">120</text>
<text x="687.10" y="433" font-size="5.25" fill="#151515" stroke="#151515" stroke-width="0.12" text-anchor="middle">140</text>
<text x="702.80" y="433" font-size="5.25" fill="#151515" stroke="#151515" stroke-width="0.12" text-anchor="middle">160</text>
<text x="718.50" y="433" font-size="5.25" fill="#151515" stroke="#151515" stroke-width="0.12" text-anchor="middle">180</text>
<text x="734.20" y="433" font-size="5.25" fill="#151515" stroke="#151515" stroke-width="0.12" text-anchor="middle">200</text>
<text x="656.00" y="442" font-size="6.4" fill="#151515" stroke="#151515" stroke-width="0.12" text-anchor="middle">Iteration</text>
<text transform="translate(562.3 346) rotate(-90)" font-size="6.4" fill="#222" text-anchor="middle">%</text></svg>
</body></html>
